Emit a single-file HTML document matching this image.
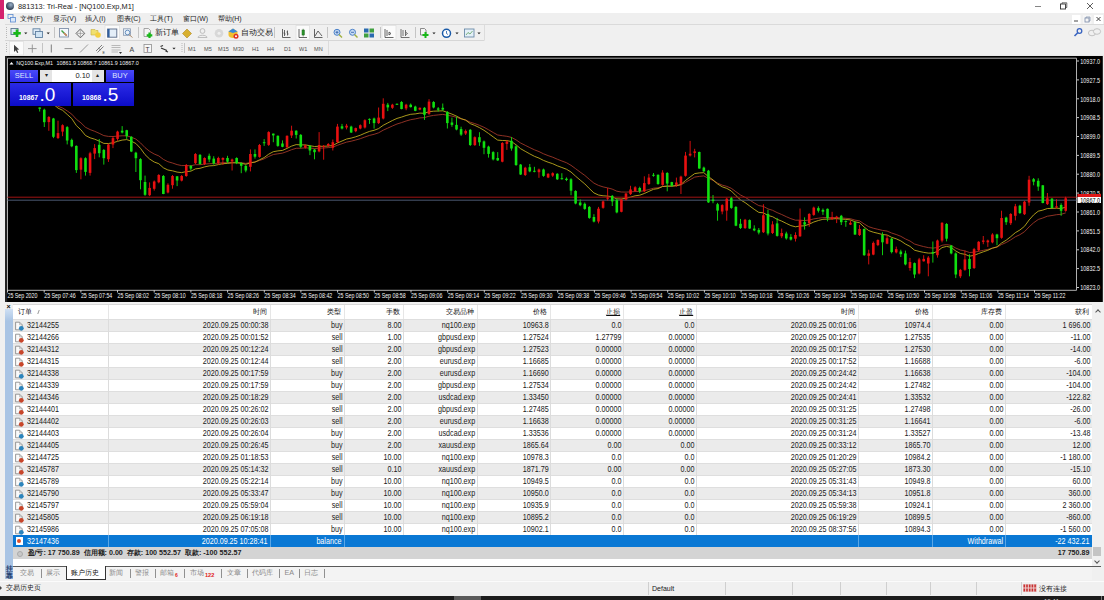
<!DOCTYPE html>
<html><head><meta charset="utf-8"><style>
html,body{margin:0;padding:0;width:1104px;height:600px;overflow:hidden;background:#f0f0f0;font-family:"Liberation Sans",sans-serif}
.abs{position:absolute;white-space:nowrap}
.txt{font-size:7.15px;color:#202020}
.tl{font-size:8.8px;transform:scaleX(0.815);transform-origin:left center}
.tr{font-size:8.8px;transform:scaleX(0.815);transform-origin:right center}
</style></head><body>
<div class="abs" style="left:0;top:0;width:1104px;height:13px;background:#fff"></div>
<div class="abs" style="left:0;top:0;width:4px;height:18.5px;background:#d4226e"></div>
<div class="abs" style="left:6px;top:2px;width:8px;height:8px;border-radius:50%;background:radial-gradient(circle at 60% 35%,#9ab0c8,#2a3a50 70%)"></div>
<div class="abs" style="left:4px;top:13px;width:1100px;height:11px;background:#efefef"></div>
<svg width="1104" height="56" style="position:absolute;left:0;top:0">
<line x1="1035" y1="6.5" x2="1041" y2="6.5" stroke="#666" stroke-width="0.8"/>
<rect x="1060.5" y="4" width="5" height="5" fill="none" stroke="#333" stroke-width="0.9"/><path d="M1062 4V2.8H1066.8V7.5H1065.5" fill="none" stroke="#333" stroke-width="0.7"/>
<path d="M1087 3L1093 9M1093 3L1087 9" stroke="#333" stroke-width="0.8"/>
<rect x="1072" y="15" width="8.5" height="9" fill="#fff"/><rect x="1083" y="15" width="8.5" height="9" fill="#f6f6f6"/><rect x="1094" y="15" width="9" height="9" fill="#fff"/>
<line x1="1074" y1="21" x2="1078" y2="21" stroke="#333" stroke-width="0.9"/>
<rect x="1085" y="18" width="4" height="4" fill="none" stroke="#7a8aa8" stroke-width="0.8"/><path d="M1086 18V17H1090V21H1089" fill="none" stroke="#7a8aa8" stroke-width="0.7"/>
<path d="M1096.5 17L1100.5 21M1100.5 17L1096.5 21" stroke="#444" stroke-width="1"/>
<rect x="8" y="14.5" width="5" height="4" fill="none" stroke="#5a8ad0" stroke-width="0.8"/><rect x="10.5" y="17.5" width="5" height="4.5" fill="#dbe8f8" stroke="#5a8ad0" stroke-width="0.8"/>
<line x1="5" y1="24.5" x2="1104" y2="24.5" stroke="#dadada"/>
<line x1="5" y1="40.5" x2="484.5" y2="40.5" stroke="#d6d6d6"/>
<line x1="484.5" y1="25" x2="484.5" y2="40" stroke="#dcdcdc"/>
<line x1="328.5" y1="41" x2="328.5" y2="55" stroke="#dcdcdc"/>
<line x1="5" y1="55.4" x2="1104" y2="55.4" stroke="#e8e8e8"/>
<line x1="6.5" y1="27" x2="6.5" y2="38" stroke="#b8b8b8" stroke-dasharray="1 1"/>
<line x1="6.5" y1="43" x2="6.5" y2="53" stroke="#b8b8b8" stroke-dasharray="1 1"/>
<line x1="182" y1="43" x2="182" y2="53" stroke="#b8b8b8" stroke-dasharray="1 1"/>
<line x1="54.5" y1="27" x2="54.5" y2="38" stroke="#c4c4c4"/>
<line x1="138.5" y1="27" x2="138.5" y2="38" stroke="#c4c4c4"/>
<line x1="274.5" y1="27" x2="274.5" y2="38" stroke="#c4c4c4"/>
<line x1="327.5" y1="27" x2="327.5" y2="38" stroke="#c4c4c4"/>
<line x1="380.5" y1="27" x2="380.5" y2="38" stroke="#c4c4c4"/>
<line x1="415.5" y1="27" x2="415.5" y2="38" stroke="#c4c4c4"/>
<line x1="42.5" y1="43" x2="42.5" y2="53" stroke="#c4c4c4"/>
<line x1="184.5" y1="43" x2="184.5" y2="53" stroke="#c4c4c4"/>
<rect x="105" y="25.5" width="14.5" height="14" fill="#fbfbfb" stroke="#e0e0e0" stroke-width="0.8"/>
<rect x="296" y="25.5" width="13.5" height="14" fill="#fbfbfb" stroke="#e0e0e0" stroke-width="0.8"/>
<rect x="382" y="25.5" width="14" height="14" fill="#fbfbfb" stroke="#e0e0e0" stroke-width="0.8"/>
<rect x="9.5" y="41.5" width="14" height="13.5" fill="#fbfbfb" stroke="#e0e0e0" stroke-width="0.8"/>
<rect x="11" y="28.5" width="7" height="6" fill="#dbe8f0" stroke="#5a7890" stroke-width="0.9"/>
<path d="M17 29.5V37M13.3 33.3H20.8" stroke="#18b818" stroke-width="2.6"/>
<path d="M24.2 32.5H27.400000000000002L25.8 34.3Z" fill="#222"/>
<path d="M46.6 32.5H49.800000000000004L48.2 34.3Z" fill="#222"/>
<path d="M432.4 32.5H435.6L434 34.3Z" fill="#222"/>
<path d="M455.4 32.5H458.6L457 34.3Z" fill="#222"/>
<path d="M477.4 32.5H480.6L479 34.3Z" fill="#222"/>
<path d="M172.4 47.7H175.6L174 49.5Z" fill="#222"/>
<rect x="33" y="28.8" width="7" height="5.5" fill="#e0ecf8" stroke="#6080a0" stroke-width="0.9"/><rect x="35.5" y="31.5" width="7" height="6" fill="#d0e4f4" stroke="#6080a0" stroke-width="0.9"/>
<rect x="59.5" y="28.5" width="9" height="8.5" fill="#f4f8fc" stroke="#8090a8" stroke-width="0.9"/><path d="M61.5 30.5L66.5 35.5" stroke="#40a040" stroke-width="1.4"/><path d="M64 33L66.8 35.8" stroke="#d08060" stroke-width="1.6"/>
<path d="M80.4 29L84.8 33.4L80.4 37.8L76 33.4Z" fill="none" stroke="#555" stroke-width="0.9"/><path d="M80.4 30V36.8M77 33.4H83.8" stroke="#888" stroke-width="0.6"/>
<path d="M91 29.5H95L96 30.5H98V35H91Z" fill="#f0e070" stroke="#c8b040" stroke-width="0.6"/><circle cx="98" cy="35" r="2.8" fill="#f4d040"/>
<rect x="107.6" y="29" width="9.2" height="8.2" fill="#e4eef8" stroke="#5a6a88" stroke-width="0.9"/><rect x="107.6" y="29" width="2" height="8.2" fill="#3060a0"/>
<rect x="123.5" y="28.8" width="7" height="6.5" fill="#e8f0f8" stroke="#8898b0" stroke-width="0.8"/><circle cx="127.5" cy="32.5" r="2.3" fill="none" stroke="#4a7ab0" stroke-width="0.8"/><path d="M129 34.5L132.5 37.5" stroke="#b09070" stroke-width="1"/>
<path d="M144 28.5H148.5L150.5 30.5V36.5H144Z" fill="#f4f4f4" stroke="#909090" stroke-width="0.8"/><path d="M149.5 32.5V38M146.7 35.3H152.3" stroke="#18b818" stroke-width="2.2"/>
<path d="M182.5 33.5L187 29L191.5 33.5L187 38Z" fill="#d8b030" stroke="#b08820" stroke-width="0.6"/>
<circle cx="202.5" cy="31" r="2.4" fill="none" stroke="#b8b8b8" stroke-width="0.9"/><path d="M198 37.5C198 34.5 207 34.5 207 37.5Z" fill="none" stroke="#b8b8b8" stroke-width="0.9"/>
<circle cx="219" cy="33.3" r="4.3" fill="#d8d8d8"/><circle cx="219" cy="33.3" r="1.5" fill="#efefef"/>
<path d="M228.5 31.5L233 28.5L237.5 31.5V35C237.5 37 235 38 233 38C231 38 228.5 37 228.5 35Z" fill="#f0c030"/><path d="M228.5 31.5L233 28.5L237.5 31.5L233 33Z" fill="#3a8ad8"/><circle cx="236" cy="36.3" r="2.5" fill="#e03020"/><circle cx="236" cy="36.3" r="1" fill="#fff"/>
<path d="M282.5 29V37.5H290.5M284.5 30V36M283.5 33H284.5M284.5 34H285.5M287.5 30.5V35.5M286.5 32H287.5M287.5 34H288.5" fill="none" stroke="#404040" stroke-width="0.8"/>
<path d="M299 29V37.5H307" fill="none" stroke="#404040" stroke-width="0.8"/><rect x="302" y="30" width="2.4" height="5" fill="#30b030" stroke="#206020" stroke-width="0.5"/><line x1="303.2" y1="28.8" x2="303.2" y2="36.5" stroke="#206020" stroke-width="0.6"/>
<path d="M314.5 29V37.5H322.5M315 36L318 31L322 36" fill="none" stroke="#404040" stroke-width="0.8"/>
<circle cx="337" cy="32.3" r="3" fill="#c8dcf4" stroke="#4a80c8" stroke-width="1"/><path d="M339 34.5L342 37.5" stroke="#a0b040" stroke-width="1.4"/>
<circle cx="352.5" cy="32.3" r="3" fill="#c8dcf4" stroke="#4a80c8" stroke-width="1"/><path d="M354.5 34.5L357.5 37.5" stroke="#a0b040" stroke-width="1.4"/>
<path d="M335.5 32.3H338.5M337 30.8V33.8" stroke="#2a5aa8" stroke-width="0.8"/><path d="M351 32.3H354" stroke="#2a5aa8" stroke-width="0.8"/>
<rect x="364" y="28.5" width="4.5" height="4" fill="#2a6ab0"/><rect x="369.5" y="28.5" width="4.5" height="4" fill="#40a040"/><rect x="364" y="33.5" width="4.5" height="4" fill="#40a040"/><rect x="369.5" y="33.5" width="4.5" height="4" fill="#2a6ab0"/>
<path d="M385 29V37.5H393.5M387 30V36M389 32L391 33.5L389 35Z" fill="none" stroke="#404040" stroke-width="0.8"/>
<path d="M401 29V37.5H409.5M403 30V36M405.5 30V36M405.5 32L407.5 33.5L405.5 35" fill="none" stroke="#505050" stroke-width="0.8"/>
<path d="M420.5 28.5H424.5L426 30V35H420.5Z" fill="#f4f4f4" stroke="#707070" stroke-width="0.8"/><path d="M425.5 32V38M422.5 35H428.5" stroke="#18b818" stroke-width="2"/>
<circle cx="446.5" cy="33.3" r="4" fill="#fff" stroke="#1a5aa8" stroke-width="1.5"/><path d="M446.5 31V33.5L448 34.5" stroke="#1a5aa8" stroke-width="0.8" fill="none"/>
<rect x="464.5" y="29" width="9.5" height="8" fill="#e4f0f8" stroke="#6a8aa8" stroke-width="0.9"/><path d="M466 35L468 32.5L470 34L472.5 31" fill="none" stroke="#60a060" stroke-width="0.8"/>
<circle cx="1079.5" cy="31" r="2.3" fill="none" stroke="#3a64c0" stroke-width="1.3"/><path d="M1078 32.5L1074.5 36" stroke="#3a64c0" stroke-width="1.6"/>
<ellipse cx="1092" cy="33" rx="3.6" ry="2.8" fill="none" stroke="#b8b8b8" stroke-width="0.8"/><ellipse cx="1097" cy="31.5" rx="3.6" ry="2.8" fill="#f0f0f0" stroke="#b8b8b8" stroke-width="0.8"/>
<path d="M14 44.7L14 52L15.8 50.3L17.2 53L18.3 52.4L17 49.8L19.2 49.5Z" fill="#404040"/>
<path d="M32.3 44.5V52.7M28 48.6H36.6" stroke="#909090" stroke-width="0.9"/>
<line x1="51.3" y1="44.5" x2="51.3" y2="52.5" stroke="#707070" stroke-width="0.9"/>
<line x1="64.5" y1="48.6" x2="72.5" y2="48.6" stroke="#909090" stroke-width="1"/>
<line x1="80" y1="52.5" x2="88" y2="44.5" stroke="#909090" stroke-width="0.9"/>
<path d="M96 51L102 45M97.5 52.5L103.5 46.5M98 48L101 50" stroke="#707070" stroke-width="0.9"/><text x="102.5" y="53.5" font-size="3.5" font-family="Liberation Sans" fill="#333">E</text>
<path d="M111.5 45.5H120.5M111.5 47.5H120.5M111.5 50H120.5M111.5 52H118" stroke="#a0a0a0" stroke-width="0.7"/><path d="M119 52L120.5 54L122 52Z" fill="#333"/>
<text x="129.5" y="51.8" font-size="7" font-family="Liberation Sans" fill="#444">A</text>
<rect x="144" y="44.5" width="7.5" height="8" fill="#f8f8f8" stroke="#909090" stroke-width="0.8"/><text x="145.6" y="51.5" font-size="6.5" font-family="Liberation Sans" fill="#333">T</text>
<path d="M160.5 46.5L163 45.5M161 48L167 50.5M165.5 51L168 52" stroke="#333" stroke-width="1.3"/>
<text x="188" y="51" font-size="5.6" font-family="Liberation Sans" fill="#555">M1</text>
<text x="204" y="51" font-size="5.6" font-family="Liberation Sans" fill="#555">M5</text>
<text x="218" y="51" font-size="5.6" font-family="Liberation Sans" fill="#555">M15</text>
<text x="233" y="51" font-size="5.6" font-family="Liberation Sans" fill="#555">M30</text>
<text x="252" y="51" font-size="5.6" font-family="Liberation Sans" fill="#555">H1</text>
<text x="267" y="51" font-size="5.6" font-family="Liberation Sans" fill="#555">H4</text>
<text x="284" y="51" font-size="5.6" font-family="Liberation Sans" fill="#555">D1</text>
<text x="299" y="51" font-size="5.6" font-family="Liberation Sans" fill="#555">W1</text>
<text x="314" y="51" font-size="5.6" font-family="Liberation Sans" fill="#555">MN</text>
</svg>
<div class="abs" style="left:18px;top:0px;font-size:7.4px;line-height:13px;color:#222">881313: Tri-Real - [NQ100.Exp,M1]</div>
<div class="abs" style="left:20px;top:13px;font-size:6.9px;line-height:11px;color:#222">文件(F)</div>
<div class="abs" style="left:53px;top:13px;font-size:6.9px;line-height:11px;color:#222">显示(V)</div>
<div class="abs" style="left:85px;top:13px;font-size:6.9px;line-height:11px;color:#222">插入(I)</div>
<div class="abs" style="left:117px;top:13px;font-size:6.9px;line-height:11px;color:#222">图表(C)</div>
<div class="abs" style="left:150px;top:13px;font-size:6.9px;line-height:11px;color:#222">工具(T)</div>
<div class="abs" style="left:183px;top:13px;font-size:6.9px;line-height:11px;color:#222">窗口(W)</div>
<div class="abs" style="left:218px;top:13px;font-size:6.9px;line-height:11px;color:#222">帮助(H)</div>
<div class="abs" style="left:155px;top:27px;font-size:7.8px;line-height:11px;color:#222">新订单</div>
<div class="abs" style="left:240.5px;top:27px;font-size:7.8px;line-height:11px;color:#222">自动交易</div>
<svg width="1104" height="302" style="position:absolute;left:0;top:0">
<rect x="5.2" y="56" width="1097.6" height="246" fill="#000"/>
<rect x="5.2" y="56" width="2" height="246" fill="#222"/>
<path d="M7.5 58.2H1076.5V290.3H7.5Z" fill="none" stroke="#b0b0b0" stroke-width="1"/>
<line x1="1077" y1="61.0" x2="1079" y2="61.0" stroke="#c8c8c8"/>
<text transform="translate(1080.3,63.7) scale(0.78,1)" fill="#f4f4f4" font-size="7" font-family="Liberation Sans">10937.0</text>
<line x1="1077" y1="79.9" x2="1079" y2="79.9" stroke="#c8c8c8"/>
<text transform="translate(1080.3,82.6) scale(0.78,1)" fill="#f4f4f4" font-size="7" font-family="Liberation Sans">10927.5</text>
<line x1="1077" y1="98.8" x2="1079" y2="98.8" stroke="#c8c8c8"/>
<text transform="translate(1080.3,101.5) scale(0.78,1)" fill="#f4f4f4" font-size="7" font-family="Liberation Sans">10918.0</text>
<line x1="1077" y1="117.6" x2="1079" y2="117.6" stroke="#c8c8c8"/>
<text transform="translate(1080.3,120.3) scale(0.78,1)" fill="#f4f4f4" font-size="7" font-family="Liberation Sans">10908.5</text>
<line x1="1077" y1="136.5" x2="1079" y2="136.5" stroke="#c8c8c8"/>
<text transform="translate(1080.3,139.2) scale(0.78,1)" fill="#f4f4f4" font-size="7" font-family="Liberation Sans">10899.0</text>
<line x1="1077" y1="155.4" x2="1079" y2="155.4" stroke="#c8c8c8"/>
<text transform="translate(1080.3,158.1) scale(0.78,1)" fill="#f4f4f4" font-size="7" font-family="Liberation Sans">10889.5</text>
<line x1="1077" y1="174.2" x2="1079" y2="174.2" stroke="#c8c8c8"/>
<text transform="translate(1080.3,176.9) scale(0.78,1)" fill="#f4f4f4" font-size="7" font-family="Liberation Sans">10880.0</text>
<line x1="1077" y1="193.1" x2="1079" y2="193.1" stroke="#c8c8c8"/>
<text transform="translate(1080.3,195.8) scale(0.78,1)" fill="#f4f4f4" font-size="7" font-family="Liberation Sans">10870.5</text>
<line x1="1077" y1="212.0" x2="1079" y2="212.0" stroke="#c8c8c8"/>
<text transform="translate(1080.3,214.7) scale(0.78,1)" fill="#f4f4f4" font-size="7" font-family="Liberation Sans">10861.0</text>
<line x1="1077" y1="230.9" x2="1079" y2="230.9" stroke="#c8c8c8"/>
<text transform="translate(1080.3,233.6) scale(0.78,1)" fill="#f4f4f4" font-size="7" font-family="Liberation Sans">10851.5</text>
<line x1="1077" y1="249.8" x2="1079" y2="249.8" stroke="#c8c8c8"/>
<text transform="translate(1080.3,252.4) scale(0.78,1)" fill="#f4f4f4" font-size="7" font-family="Liberation Sans">10842.0</text>
<line x1="1077" y1="268.6" x2="1079" y2="268.6" stroke="#c8c8c8"/>
<text transform="translate(1080.3,271.3) scale(0.78,1)" fill="#f4f4f4" font-size="7" font-family="Liberation Sans">10832.5</text>
<line x1="1077" y1="287.5" x2="1079" y2="287.5" stroke="#c8c8c8"/>
<text transform="translate(1080.3,290.2) scale(0.78,1)" fill="#f4f4f4" font-size="7" font-family="Liberation Sans">10823.0</text>
<line x1="7.5" y1="290" x2="7.5" y2="292.5" stroke="#c8c8c8"/>
<text transform="translate(7.5,297.6) scale(0.84,1)" fill="#f4f4f4" font-size="6.3" font-family="Liberation Sans">25 Sep 2020</text>
<line x1="44.2" y1="290" x2="44.2" y2="292.5" stroke="#c8c8c8"/>
<text transform="translate(44.2,297.6) scale(0.84,1)" fill="#f4f4f4" font-size="6.3" font-family="Liberation Sans">25 Sep 07:46</text>
<line x1="80.9" y1="290" x2="80.9" y2="292.5" stroke="#c8c8c8"/>
<text transform="translate(80.9,297.6) scale(0.84,1)" fill="#f4f4f4" font-size="6.3" font-family="Liberation Sans">25 Sep 07:54</text>
<line x1="117.5" y1="290" x2="117.5" y2="292.5" stroke="#c8c8c8"/>
<text transform="translate(117.5,297.6) scale(0.84,1)" fill="#f4f4f4" font-size="6.3" font-family="Liberation Sans">25 Sep 08:02</text>
<line x1="154.2" y1="290" x2="154.2" y2="292.5" stroke="#c8c8c8"/>
<text transform="translate(154.2,297.6) scale(0.84,1)" fill="#f4f4f4" font-size="6.3" font-family="Liberation Sans">25 Sep 08:10</text>
<line x1="190.9" y1="290" x2="190.9" y2="292.5" stroke="#c8c8c8"/>
<text transform="translate(190.9,297.6) scale(0.84,1)" fill="#f4f4f4" font-size="6.3" font-family="Liberation Sans">25 Sep 08:18</text>
<line x1="227.6" y1="290" x2="227.6" y2="292.5" stroke="#c8c8c8"/>
<text transform="translate(227.6,297.6) scale(0.84,1)" fill="#f4f4f4" font-size="6.3" font-family="Liberation Sans">25 Sep 08:26</text>
<line x1="264.3" y1="290" x2="264.3" y2="292.5" stroke="#c8c8c8"/>
<text transform="translate(264.3,297.6) scale(0.84,1)" fill="#f4f4f4" font-size="6.3" font-family="Liberation Sans">25 Sep 08:34</text>
<line x1="300.9" y1="290" x2="300.9" y2="292.5" stroke="#c8c8c8"/>
<text transform="translate(300.9,297.6) scale(0.84,1)" fill="#f4f4f4" font-size="6.3" font-family="Liberation Sans">25 Sep 08:42</text>
<line x1="337.6" y1="290" x2="337.6" y2="292.5" stroke="#c8c8c8"/>
<text transform="translate(337.6,297.6) scale(0.84,1)" fill="#f4f4f4" font-size="6.3" font-family="Liberation Sans">25 Sep 08:50</text>
<line x1="374.3" y1="290" x2="374.3" y2="292.5" stroke="#c8c8c8"/>
<text transform="translate(374.3,297.6) scale(0.84,1)" fill="#f4f4f4" font-size="6.3" font-family="Liberation Sans">25 Sep 08:58</text>
<line x1="411.0" y1="290" x2="411.0" y2="292.5" stroke="#c8c8c8"/>
<text transform="translate(411.0,297.6) scale(0.84,1)" fill="#f4f4f4" font-size="6.3" font-family="Liberation Sans">25 Sep 09:06</text>
<line x1="447.7" y1="290" x2="447.7" y2="292.5" stroke="#c8c8c8"/>
<text transform="translate(447.7,297.6) scale(0.84,1)" fill="#f4f4f4" font-size="6.3" font-family="Liberation Sans">25 Sep 09:14</text>
<line x1="484.3" y1="290" x2="484.3" y2="292.5" stroke="#c8c8c8"/>
<text transform="translate(484.3,297.6) scale(0.84,1)" fill="#f4f4f4" font-size="6.3" font-family="Liberation Sans">25 Sep 09:22</text>
<line x1="521.0" y1="290" x2="521.0" y2="292.5" stroke="#c8c8c8"/>
<text transform="translate(521.0,297.6) scale(0.84,1)" fill="#f4f4f4" font-size="6.3" font-family="Liberation Sans">25 Sep 09:30</text>
<line x1="557.7" y1="290" x2="557.7" y2="292.5" stroke="#c8c8c8"/>
<text transform="translate(557.7,297.6) scale(0.84,1)" fill="#f4f4f4" font-size="6.3" font-family="Liberation Sans">25 Sep 09:38</text>
<line x1="594.4" y1="290" x2="594.4" y2="292.5" stroke="#c8c8c8"/>
<text transform="translate(594.4,297.6) scale(0.84,1)" fill="#f4f4f4" font-size="6.3" font-family="Liberation Sans">25 Sep 09:46</text>
<line x1="631.1" y1="290" x2="631.1" y2="292.5" stroke="#c8c8c8"/>
<text transform="translate(631.1,297.6) scale(0.84,1)" fill="#f4f4f4" font-size="6.3" font-family="Liberation Sans">25 Sep 09:54</text>
<line x1="667.7" y1="290" x2="667.7" y2="292.5" stroke="#c8c8c8"/>
<text transform="translate(667.7,297.6) scale(0.84,1)" fill="#f4f4f4" font-size="6.3" font-family="Liberation Sans">25 Sep 10:02</text>
<line x1="704.4" y1="290" x2="704.4" y2="292.5" stroke="#c8c8c8"/>
<text transform="translate(704.4,297.6) scale(0.84,1)" fill="#f4f4f4" font-size="6.3" font-family="Liberation Sans">25 Sep 10:10</text>
<line x1="741.1" y1="290" x2="741.1" y2="292.5" stroke="#c8c8c8"/>
<text transform="translate(741.1,297.6) scale(0.84,1)" fill="#f4f4f4" font-size="6.3" font-family="Liberation Sans">25 Sep 10:18</text>
<line x1="777.8" y1="290" x2="777.8" y2="292.5" stroke="#c8c8c8"/>
<text transform="translate(777.8,297.6) scale(0.84,1)" fill="#f4f4f4" font-size="6.3" font-family="Liberation Sans">25 Sep 10:26</text>
<line x1="814.5" y1="290" x2="814.5" y2="292.5" stroke="#c8c8c8"/>
<text transform="translate(814.5,297.6) scale(0.84,1)" fill="#f4f4f4" font-size="6.3" font-family="Liberation Sans">25 Sep 10:34</text>
<line x1="851.1" y1="290" x2="851.1" y2="292.5" stroke="#c8c8c8"/>
<text transform="translate(851.1,297.6) scale(0.84,1)" fill="#f4f4f4" font-size="6.3" font-family="Liberation Sans">25 Sep 10:42</text>
<line x1="887.8" y1="290" x2="887.8" y2="292.5" stroke="#c8c8c8"/>
<text transform="translate(887.8,297.6) scale(0.84,1)" fill="#f4f4f4" font-size="6.3" font-family="Liberation Sans">25 Sep 10:50</text>
<line x1="924.5" y1="290" x2="924.5" y2="292.5" stroke="#c8c8c8"/>
<text transform="translate(924.5,297.6) scale(0.84,1)" fill="#f4f4f4" font-size="6.3" font-family="Liberation Sans">25 Sep 10:58</text>
<line x1="961.2" y1="290" x2="961.2" y2="292.5" stroke="#c8c8c8"/>
<text transform="translate(961.2,297.6) scale(0.84,1)" fill="#f4f4f4" font-size="6.3" font-family="Liberation Sans">25 Sep 11:06</text>
<line x1="997.9" y1="290" x2="997.9" y2="292.5" stroke="#c8c8c8"/>
<text transform="translate(997.9,297.6) scale(0.84,1)" fill="#f4f4f4" font-size="6.3" font-family="Liberation Sans">25 Sep 11:14</text>
<line x1="1034.5" y1="290" x2="1034.5" y2="292.5" stroke="#c8c8c8"/>
<text transform="translate(1034.5,297.6) scale(0.84,1)" fill="#f4f4f4" font-size="6.3" font-family="Liberation Sans">25 Sep 11:22</text>
<polyline points="53.4,103.6 58.0,106.3 62.6,108.0 67.2,110.9 71.8,114.2 76.3,119.2 80.9,122.8 85.5,127.3 90.1,129.6 94.7,131.3 99.2,133.3 103.8,135.6 108.4,136.4 113.0,136.5 117.6,136.1 122.1,135.8 126.7,135.8 131.3,137.2 135.9,139.1 140.5,142.9 145.0,147.6 149.6,151.3 154.2,154.0 158.8,155.9 163.4,159.4 167.9,161.7 172.5,163.0 177.1,164.6 181.7,165.6 186.3,165.5 190.8,165.8 195.4,164.7 200.0,164.7 204.6,164.1 209.2,163.7 213.7,163.6 218.3,163.1 222.9,162.7 227.5,162.6 232.1,162.3 236.6,162.4 241.2,162.7 245.8,163.4 250.4,162.5 255.0,162.0 259.5,160.5 264.1,158.9 268.7,156.5 273.3,154.5 277.9,153.8 282.5,153.1 287.0,151.5 291.6,149.7 296.2,148.3 300.8,148.2 305.4,147.9 309.9,148.1 314.5,148.5 319.1,148.2 323.7,148.0 328.3,147.6 332.8,147.1 337.4,145.3 342.0,143.7 346.6,142.1 351.2,141.2 355.7,140.0 360.3,138.7 364.9,137.0 369.5,135.4 374.1,134.3 378.6,132.8 383.2,130.2 387.8,128.1 392.4,126.0 397.0,124.0 401.5,122.6 406.1,121.0 410.7,119.7 415.3,118.9 419.9,117.9 424.4,117.6 429.0,116.2 433.6,115.4 438.2,114.9 442.8,114.4 447.3,115.2 451.9,116.1 456.5,117.3 461.1,118.9 465.7,120.0 470.2,122.2 474.8,123.6 479.4,125.3 484.0,127.3 488.6,129.8 493.2,132.5 497.7,135.0 502.3,135.7 506.9,136.3 511.5,137.4 516.1,139.9 520.6,143.0 525.2,145.3 529.8,147.6 534.4,149.8 539.0,151.6 543.5,153.8 548.1,155.6 552.7,157.2 557.3,159.2 561.9,161.0 566.4,162.7 571.0,165.3 575.6,168.7 580.2,172.1 584.8,175.4 589.3,179.3 593.9,183.1 598.5,185.4 603.1,186.9 607.7,187.9 612.2,189.1 616.8,191.2 621.4,192.0 626.0,192.1 630.6,191.9 635.1,191.5 639.7,191.4 644.3,190.7 648.9,189.5 653.5,188.2 658.0,187.8 662.6,186.5 667.2,186.2 671.8,186.2 676.4,185.8 680.9,185.0 685.5,182.3 690.1,179.7 694.7,177.1 699.3,176.4 703.8,175.9 708.4,178.3 713.0,180.4 717.6,183.1 722.2,185.1 726.8,186.4 731.3,188.3 735.9,191.7 740.5,195.0 745.1,197.3 749.7,200.1 754.2,202.9 758.8,205.6 763.4,206.4 768.0,208.9 772.6,210.3 777.1,212.6 781.7,214.5 786.3,216.7 790.9,218.7 795.5,220.2 800.0,220.2 804.6,220.6 809.2,220.0 813.8,218.9 818.4,218.2 822.9,217.6 827.5,217.6 832.1,217.6 836.7,217.5 841.3,217.9 845.8,218.3 850.4,218.7 855.0,220.1 859.6,220.9 864.2,224.0 868.7,226.7 873.3,228.2 877.9,229.3 882.5,230.4 887.1,231.1 891.6,233.0 896.2,234.5 900.8,236.3 905.4,238.9 910.0,241.0 914.5,244.0 919.1,245.4 923.7,246.6 928.3,247.6 932.9,248.1 937.4,247.5 942.0,245.2 946.6,244.6 951.2,245.4 955.8,248.1 960.4,250.0 964.9,250.9 969.5,252.5 974.1,252.2 978.7,251.3 983.3,250.3 987.8,249.4 992.4,248.1 997.0,247.2 1001.6,244.5 1006.2,242.5 1010.7,239.9 1015.3,236.8 1019.9,234.7 1024.5,231.7 1029.1,226.9 1033.6,222.8 1038.2,219.5 1042.8,218.0 1047.4,216.2 1052.0,215.5 1056.5,214.7 1061.1,214.3 1065.7,212.9" fill="none" stroke="#a83a2a" stroke-width="0.85"/>
<polyline points="53.4,104.2 58.0,108.1 62.6,110.3 67.2,114.4 71.8,118.6 76.3,125.5 80.9,129.8 85.5,135.5 90.1,137.8 94.7,139.2 99.2,141.1 103.8,143.4 108.4,143.5 113.0,142.8 117.6,141.3 122.1,140.1 126.7,139.6 131.3,141.2 135.9,143.5 140.5,148.4 145.0,154.6 149.6,159.0 154.2,162.0 158.8,163.7 163.4,167.8 167.9,170.0 172.5,170.8 177.1,172.1 181.7,172.6 186.3,171.6 190.8,171.2 195.4,168.9 200.0,168.3 204.6,166.9 209.2,165.9 213.7,165.6 218.3,164.6 222.9,163.7 227.5,163.4 232.1,162.9 236.6,162.9 241.2,163.3 245.8,164.3 250.4,162.9 255.0,162.1 259.5,159.8 264.1,157.6 268.7,154.2 273.3,151.7 277.9,150.9 282.5,150.4 287.0,148.4 291.6,146.1 296.2,144.6 300.8,144.9 305.4,144.9 309.9,145.7 314.5,146.5 319.1,146.3 323.7,146.3 328.3,146.0 332.8,145.5 337.4,143.0 342.0,141.0 346.6,139.0 351.2,138.1 355.7,136.8 360.3,135.2 364.9,133.2 369.5,131.4 374.1,130.3 378.6,128.6 383.2,125.3 387.8,122.9 392.4,120.5 397.0,118.4 401.5,117.1 406.1,115.5 410.7,114.3 415.3,113.9 419.9,113.1 424.4,113.3 429.0,111.7 433.6,111.2 438.2,111.0 442.8,110.8 447.3,112.4 451.9,114.1 456.5,116.1 461.1,118.6 465.7,120.2 470.2,123.6 474.8,125.4 479.4,127.6 484.0,130.3 488.6,133.5 493.2,136.9 497.7,140.1 502.3,140.5 506.9,140.6 511.5,141.6 516.1,144.8 520.6,148.7 525.2,151.3 529.8,153.9 534.4,156.3 539.0,158.1 543.5,160.4 548.1,162.2 552.7,163.7 557.3,165.8 561.9,167.5 566.4,169.2 571.0,172.0 575.6,176.2 580.2,180.1 584.8,183.9 589.3,188.5 593.9,192.9 598.5,195.0 603.1,195.8 607.7,196.1 612.2,196.8 616.8,198.9 621.4,199.0 626.0,198.2 630.6,197.1 635.1,195.8 639.7,195.2 644.3,193.5 648.9,191.4 653.5,189.3 658.0,188.6 662.6,186.5 667.2,186.1 671.8,186.1 676.4,185.6 680.9,184.4 685.5,180.5 690.1,177.0 694.7,173.6 699.3,172.9 703.8,172.7 708.4,176.6 713.0,179.9 717.6,184.0 722.2,186.8 726.8,188.4 731.3,191.0 735.9,195.6 740.5,199.9 745.1,202.6 749.7,206.0 754.2,209.3 758.8,212.4 763.4,212.8 768.0,215.5 772.6,216.7 777.1,219.3 781.7,221.1 786.3,223.4 790.9,225.6 795.5,226.8 800.0,226.0 804.6,225.8 809.2,224.2 813.8,222.0 818.4,220.5 822.9,219.3 827.5,219.1 832.1,218.9 836.7,218.6 841.3,219.1 845.8,219.4 850.4,219.9 855.0,221.8 859.6,222.8 864.2,227.1 868.7,230.6 873.3,232.2 877.9,233.3 882.5,234.5 887.1,235.0 891.6,237.3 896.2,238.8 900.8,240.9 905.4,244.0 910.0,246.4 914.5,250.2 919.1,251.4 923.7,252.4 928.3,253.1 932.9,253.1 937.4,251.4 942.0,247.6 946.6,246.4 951.2,247.4 955.8,251.0 960.4,253.5 964.9,254.3 969.5,256.2 974.1,255.3 978.7,253.5 983.3,251.8 987.8,250.3 992.4,248.2 997.0,246.8 1001.6,243.0 1006.2,240.2 1010.7,236.7 1015.3,232.7 1019.9,230.0 1024.5,226.3 1029.1,220.0 1033.6,214.9 1038.2,211.2 1042.8,210.1 1047.4,208.5 1052.0,208.4 1056.5,208.2 1061.1,208.5 1065.7,207.2" fill="none" stroke="#c8b420" stroke-width="0.85"/>
<line x1="7.5" y1="197.2" x2="1076.5" y2="197.2" stroke="#a01414" stroke-width="1"/>
<line x1="7.5" y1="200.2" x2="1076.5" y2="200.2" stroke="#4a5870" stroke-width="1"/>
<rect x="39.24" y="107.5" width="0.9" height="4.0" fill="#10e010"/>
<rect x="38.39" y="107.5" width="2.6" height="1.3" fill="#10e010"/>
<rect x="43.82" y="108.7" width="0.9" height="18.3" fill="#10e010"/>
<rect x="42.97" y="109.7" width="2.6" height="12.5" fill="#10e010"/>
<rect x="48.40" y="116.1" width="0.9" height="14.7" fill="#e81010"/>
<rect x="47.55" y="117.0" width="2.6" height="5.1" fill="#e81010"/>
<rect x="52.98" y="117.9" width="0.9" height="20.2" fill="#10e010"/>
<rect x="52.13" y="118.5" width="2.6" height="18.3" fill="#10e010"/>
<rect x="57.56" y="120.7" width="0.9" height="18.3" fill="#e81010"/>
<rect x="56.71" y="133.1" width="2.6" height="4.9" fill="#e81010"/>
<rect x="62.14" y="124.3" width="0.9" height="11.9" fill="#e81010"/>
<rect x="61.29" y="125.2" width="2.6" height="6.4" fill="#e81010"/>
<rect x="66.72" y="126.1" width="0.9" height="18.3" fill="#10e010"/>
<rect x="65.87" y="127.1" width="2.6" height="13.4" fill="#10e010"/>
<rect x="71.30" y="138.6" width="0.9" height="8.6" fill="#10e010"/>
<rect x="70.45" y="139.9" width="2.6" height="6.4" fill="#10e010"/>
<rect x="75.88" y="145.4" width="0.9" height="27.5" fill="#10e010"/>
<rect x="75.03" y="145.9" width="2.6" height="24.2" fill="#10e010"/>
<rect x="80.46" y="157.3" width="0.9" height="22.0" fill="#e81010"/>
<rect x="79.61" y="158.2" width="2.6" height="11.5" fill="#e81010"/>
<rect x="85.04" y="157.3" width="0.9" height="18.3" fill="#10e010"/>
<rect x="84.19" y="158.2" width="2.6" height="13.7" fill="#10e010"/>
<rect x="89.62" y="151.8" width="0.9" height="23.8" fill="#e81010"/>
<rect x="88.77" y="153.3" width="2.6" height="19.6" fill="#e81010"/>
<rect x="94.21" y="144.1" width="0.9" height="15.0" fill="#e81010"/>
<rect x="93.36" y="148.1" width="2.6" height="5.5" fill="#e81010"/>
<rect x="98.79" y="139.0" width="0.9" height="18.3" fill="#10e010"/>
<rect x="97.94" y="144.8" width="2.6" height="8.4" fill="#10e010"/>
<rect x="103.37" y="149.0" width="0.9" height="15.6" fill="#10e010"/>
<rect x="102.52" y="150.0" width="2.6" height="8.2" fill="#10e010"/>
<rect x="107.95" y="143.6" width="0.9" height="18.3" fill="#e81010"/>
<rect x="107.10" y="144.5" width="2.6" height="14.7" fill="#e81010"/>
<rect x="112.53" y="136.2" width="0.9" height="11.9" fill="#e81010"/>
<rect x="111.68" y="138.1" width="2.6" height="6.4" fill="#e81010"/>
<rect x="117.11" y="130.7" width="0.9" height="10.1" fill="#e81010"/>
<rect x="116.26" y="131.6" width="2.6" height="7.3" fill="#e81010"/>
<rect x="121.69" y="126.1" width="0.9" height="7.3" fill="#10e010"/>
<rect x="120.84" y="130.7" width="2.6" height="1.8" fill="#10e010"/>
<rect x="126.27" y="129.8" width="0.9" height="9.2" fill="#10e010"/>
<rect x="125.42" y="130.2" width="2.6" height="6.0" fill="#10e010"/>
<rect x="130.85" y="136.2" width="0.9" height="15.9" fill="#10e010"/>
<rect x="130.00" y="136.8" width="2.6" height="14.7" fill="#10e010"/>
<rect x="135.43" y="151.8" width="0.9" height="20.2" fill="#10e010"/>
<rect x="134.58" y="152.7" width="2.6" height="5.5" fill="#10e010"/>
<rect x="140.01" y="158.2" width="0.9" height="31.1" fill="#10e010"/>
<rect x="139.16" y="159.1" width="2.6" height="21.1" fill="#10e010"/>
<rect x="144.59" y="175.6" width="0.9" height="20.2" fill="#10e010"/>
<rect x="143.74" y="182.0" width="2.6" height="12.8" fill="#10e010"/>
<rect x="149.17" y="182.4" width="0.9" height="13.7" fill="#e81010"/>
<rect x="148.32" y="187.9" width="2.6" height="7.3" fill="#e81010"/>
<rect x="153.75" y="180.5" width="0.9" height="10.1" fill="#e81010"/>
<rect x="152.90" y="181.5" width="2.6" height="7.3" fill="#e81010"/>
<rect x="158.33" y="174.1" width="0.9" height="9.2" fill="#e81010"/>
<rect x="157.48" y="175.0" width="2.6" height="7.3" fill="#e81010"/>
<rect x="162.91" y="175.0" width="0.9" height="19.2" fill="#10e010"/>
<rect x="162.06" y="176.0" width="2.6" height="18.0" fill="#10e010"/>
<rect x="167.49" y="183.3" width="0.9" height="10.1" fill="#e81010"/>
<rect x="166.64" y="184.8" width="2.6" height="7.7" fill="#e81010"/>
<rect x="172.07" y="175.0" width="0.9" height="13.7" fill="#e81010"/>
<rect x="171.22" y="176.0" width="2.6" height="9.2" fill="#e81010"/>
<rect x="176.65" y="176.0" width="0.9" height="10.1" fill="#10e010"/>
<rect x="175.80" y="176.3" width="2.6" height="4.2" fill="#10e010"/>
<rect x="181.23" y="175.0" width="0.9" height="6.4" fill="#e81010"/>
<rect x="180.38" y="176.0" width="2.6" height="4.6" fill="#e81010"/>
<rect x="185.81" y="164.0" width="0.9" height="12.8" fill="#e81010"/>
<rect x="184.96" y="165.0" width="2.6" height="11.0" fill="#e81010"/>
<rect x="190.39" y="165.0" width="0.9" height="5.5" fill="#10e010"/>
<rect x="189.54" y="165.9" width="2.6" height="2.7" fill="#10e010"/>
<rect x="194.97" y="153.1" width="0.9" height="11.0" fill="#e81010"/>
<rect x="194.12" y="154.0" width="2.6" height="9.2" fill="#e81010"/>
<rect x="199.55" y="154.0" width="0.9" height="10.6" fill="#10e010"/>
<rect x="198.70" y="154.9" width="2.6" height="9.2" fill="#10e010"/>
<rect x="204.13" y="157.3" width="0.9" height="7.7" fill="#e81010"/>
<rect x="203.28" y="158.0" width="2.6" height="6.0" fill="#e81010"/>
<rect x="208.72" y="153.6" width="0.9" height="8.6" fill="#10e010"/>
<rect x="207.87" y="155.8" width="2.6" height="3.7" fill="#10e010"/>
<rect x="213.30" y="156.2" width="0.9" height="8.4" fill="#10e010"/>
<rect x="212.45" y="158.6" width="2.6" height="4.9" fill="#10e010"/>
<rect x="217.88" y="156.7" width="0.9" height="8.2" fill="#e81010"/>
<rect x="217.03" y="158.0" width="2.6" height="5.1" fill="#e81010"/>
<rect x="222.46" y="157.3" width="0.9" height="7.7" fill="#e81010"/>
<rect x="221.61" y="158.0" width="2.6" height="1.8" fill="#e81010"/>
<rect x="227.04" y="155.8" width="0.9" height="7.3" fill="#10e010"/>
<rect x="226.19" y="158.0" width="2.6" height="3.7" fill="#10e010"/>
<rect x="231.62" y="158.6" width="0.9" height="11.9" fill="#e81010"/>
<rect x="230.77" y="159.5" width="2.6" height="1.8" fill="#e81010"/>
<rect x="236.20" y="157.3" width="0.9" height="6.8" fill="#10e010"/>
<rect x="235.35" y="158.0" width="2.6" height="5.1" fill="#10e010"/>
<rect x="240.78" y="162.2" width="0.9" height="11.0" fill="#10e010"/>
<rect x="239.93" y="163.1" width="2.6" height="2.7" fill="#10e010"/>
<rect x="245.36" y="165.0" width="0.9" height="7.3" fill="#10e010"/>
<rect x="244.51" y="165.9" width="2.6" height="4.6" fill="#10e010"/>
<rect x="249.94" y="149.4" width="0.9" height="22.0" fill="#e81010"/>
<rect x="249.09" y="154.0" width="2.6" height="12.8" fill="#e81010"/>
<rect x="254.52" y="149.4" width="0.9" height="9.2" fill="#10e010"/>
<rect x="253.67" y="154.0" width="2.6" height="2.7" fill="#10e010"/>
<rect x="259.10" y="144.0" width="0.9" height="13.7" fill="#e81010"/>
<rect x="258.25" y="145.0" width="2.6" height="11.9" fill="#e81010"/>
<rect x="263.68" y="139.1" width="0.9" height="6.8" fill="#10e010"/>
<rect x="262.83" y="142.2" width="2.6" height="1.0" fill="#10e010"/>
<rect x="268.26" y="131.2" width="0.9" height="14.7" fill="#e81010"/>
<rect x="267.41" y="132.1" width="2.6" height="12.8" fill="#e81010"/>
<rect x="272.84" y="133.6" width="0.9" height="8.6" fill="#10e010"/>
<rect x="271.99" y="133.6" width="2.6" height="1.8" fill="#10e010"/>
<rect x="277.42" y="135.4" width="0.9" height="11.4" fill="#10e010"/>
<rect x="276.57" y="135.8" width="2.6" height="10.1" fill="#10e010"/>
<rect x="282.00" y="140.4" width="0.9" height="6.8" fill="#10e010"/>
<rect x="281.15" y="143.5" width="2.6" height="3.3" fill="#10e010"/>
<rect x="286.58" y="135.4" width="0.9" height="12.8" fill="#e81010"/>
<rect x="285.73" y="135.8" width="2.6" height="11.4" fill="#e81010"/>
<rect x="291.16" y="125.7" width="0.9" height="12.3" fill="#e81010"/>
<rect x="290.31" y="130.7" width="2.6" height="4.8" fill="#e81010"/>
<rect x="295.74" y="130.3" width="0.9" height="8.2" fill="#10e010"/>
<rect x="294.89" y="130.7" width="2.6" height="4.2" fill="#10e010"/>
<rect x="300.32" y="134.0" width="0.9" height="14.3" fill="#10e010"/>
<rect x="299.47" y="134.9" width="2.6" height="11.9" fill="#10e010"/>
<rect x="304.90" y="144.6" width="0.9" height="4.0" fill="#e81010"/>
<rect x="304.05" y="145.3" width="2.6" height="2.4" fill="#e81010"/>
<rect x="309.48" y="145.0" width="0.9" height="10.1" fill="#10e010"/>
<rect x="308.63" y="145.9" width="2.6" height="4.6" fill="#10e010"/>
<rect x="314.06" y="149.0" width="0.9" height="10.3" fill="#10e010"/>
<rect x="313.21" y="149.5" width="2.6" height="2.7" fill="#10e010"/>
<rect x="318.65" y="132.1" width="0.9" height="20.2" fill="#e81010"/>
<rect x="317.80" y="145.0" width="2.6" height="6.4" fill="#e81010"/>
<rect x="323.23" y="145.0" width="0.9" height="14.7" fill="#e81010"/>
<rect x="322.38" y="145.9" width="2.6" height="1.0" fill="#e81010"/>
<rect x="327.81" y="143.1" width="0.9" height="3.7" fill="#e81010"/>
<rect x="326.96" y="144.0" width="2.6" height="1.8" fill="#e81010"/>
<rect x="332.39" y="139.5" width="0.9" height="11.0" fill="#e81010"/>
<rect x="331.54" y="142.2" width="2.6" height="5.5" fill="#e81010"/>
<rect x="336.97" y="123.9" width="0.9" height="19.2" fill="#e81010"/>
<rect x="336.12" y="126.6" width="2.6" height="15.6" fill="#e81010"/>
<rect x="341.55" y="123.9" width="0.9" height="5.5" fill="#10e010"/>
<rect x="340.70" y="126.3" width="2.6" height="2.2" fill="#10e010"/>
<rect x="346.13" y="123.9" width="0.9" height="5.5" fill="#e81010"/>
<rect x="345.28" y="125.7" width="2.6" height="1.8" fill="#e81010"/>
<rect x="350.71" y="125.7" width="0.9" height="7.3" fill="#10e010"/>
<rect x="349.86" y="126.6" width="2.6" height="5.9" fill="#10e010"/>
<rect x="355.29" y="127.6" width="0.9" height="4.6" fill="#e81010"/>
<rect x="354.44" y="128.1" width="2.6" height="3.1" fill="#e81010"/>
<rect x="359.87" y="124.4" width="0.9" height="4.9" fill="#e81010"/>
<rect x="359.02" y="125.2" width="2.6" height="3.3" fill="#e81010"/>
<rect x="364.45" y="119.3" width="0.9" height="9.2" fill="#e81010"/>
<rect x="363.60" y="120.2" width="2.6" height="7.3" fill="#e81010"/>
<rect x="369.03" y="118.4" width="0.9" height="5.5" fill="#10e010"/>
<rect x="368.18" y="118.9" width="2.6" height="1.0" fill="#10e010"/>
<rect x="373.61" y="117.6" width="0.9" height="11.0" fill="#10e010"/>
<rect x="372.76" y="118.5" width="2.6" height="4.6" fill="#10e010"/>
<rect x="378.19" y="107.5" width="0.9" height="16.5" fill="#e81010"/>
<rect x="377.34" y="117.6" width="2.6" height="5.5" fill="#e81010"/>
<rect x="382.77" y="98.3" width="0.9" height="21.1" fill="#e81010"/>
<rect x="381.92" y="103.8" width="2.6" height="14.7" fill="#e81010"/>
<rect x="387.35" y="102.9" width="0.9" height="8.2" fill="#10e010"/>
<rect x="386.50" y="104.7" width="2.6" height="2.7" fill="#10e010"/>
<rect x="391.93" y="103.8" width="0.9" height="5.1" fill="#e81010"/>
<rect x="391.08" y="104.7" width="2.6" height="3.1" fill="#e81010"/>
<rect x="396.51" y="103.5" width="0.9" height="1.3" fill="#10e010"/>
<rect x="395.66" y="103.8" width="2.6" height="1.0" fill="#10e010"/>
<rect x="401.09" y="101.1" width="0.9" height="8.2" fill="#10e010"/>
<rect x="400.24" y="102.0" width="2.6" height="7.0" fill="#10e010"/>
<rect x="405.67" y="103.8" width="0.9" height="6.4" fill="#e81010"/>
<rect x="404.82" y="104.7" width="2.6" height="3.7" fill="#e81010"/>
<rect x="410.25" y="103.5" width="0.9" height="4.0" fill="#10e010"/>
<rect x="409.40" y="104.7" width="2.6" height="2.4" fill="#10e010"/>
<rect x="414.83" y="105.7" width="0.9" height="5.5" fill="#10e010"/>
<rect x="413.98" y="106.6" width="2.6" height="4.2" fill="#10e010"/>
<rect x="419.41" y="107.5" width="0.9" height="2.7" fill="#e81010"/>
<rect x="418.56" y="107.8" width="2.6" height="1.8" fill="#e81010"/>
<rect x="423.99" y="107.1" width="0.9" height="12.8" fill="#10e010"/>
<rect x="423.14" y="107.8" width="2.6" height="7.0" fill="#10e010"/>
<rect x="428.57" y="99.2" width="0.9" height="15.6" fill="#e81010"/>
<rect x="427.72" y="101.6" width="2.6" height="12.3" fill="#e81010"/>
<rect x="433.16" y="101.1" width="0.9" height="7.3" fill="#10e010"/>
<rect x="432.31" y="102.0" width="2.6" height="5.5" fill="#10e010"/>
<rect x="437.74" y="107.1" width="0.9" height="4.4" fill="#10e010"/>
<rect x="436.89" y="108.4" width="2.6" height="1.3" fill="#10e010"/>
<rect x="442.32" y="103.5" width="0.9" height="7.3" fill="#10e010"/>
<rect x="441.47" y="107.8" width="2.6" height="1.8" fill="#10e010"/>
<rect x="446.90" y="111.1" width="0.9" height="17.4" fill="#10e010"/>
<rect x="446.05" y="112.1" width="2.6" height="11.0" fill="#10e010"/>
<rect x="451.48" y="117.6" width="0.9" height="9.2" fill="#10e010"/>
<rect x="450.63" y="122.5" width="2.6" height="2.4" fill="#10e010"/>
<rect x="456.06" y="116.6" width="0.9" height="13.7" fill="#10e010"/>
<rect x="455.21" y="124.9" width="2.6" height="4.6" fill="#10e010"/>
<rect x="460.64" y="126.7" width="0.9" height="9.2" fill="#10e010"/>
<rect x="459.79" y="129.1" width="2.6" height="5.5" fill="#10e010"/>
<rect x="465.22" y="129.5" width="0.9" height="5.5" fill="#e81010"/>
<rect x="464.37" y="130.9" width="2.6" height="2.6" fill="#e81010"/>
<rect x="469.80" y="129.1" width="0.9" height="16.9" fill="#10e010"/>
<rect x="468.95" y="129.8" width="2.6" height="15.2" fill="#10e010"/>
<rect x="474.38" y="136.4" width="0.9" height="9.5" fill="#e81010"/>
<rect x="473.53" y="137.2" width="2.6" height="7.9" fill="#e81010"/>
<rect x="478.96" y="132.2" width="0.9" height="13.7" fill="#10e010"/>
<rect x="478.11" y="137.2" width="2.6" height="5.1" fill="#10e010"/>
<rect x="483.54" y="140.5" width="0.9" height="13.7" fill="#10e010"/>
<rect x="482.69" y="141.4" width="2.6" height="6.4" fill="#10e010"/>
<rect x="488.12" y="145.7" width="0.9" height="11.9" fill="#10e010"/>
<rect x="487.27" y="146.6" width="2.6" height="7.3" fill="#10e010"/>
<rect x="492.70" y="151.2" width="0.9" height="9.2" fill="#10e010"/>
<rect x="491.85" y="152.1" width="2.6" height="7.3" fill="#10e010"/>
<rect x="497.28" y="152.1" width="0.9" height="8.8" fill="#10e010"/>
<rect x="496.43" y="158.0" width="2.6" height="2.4" fill="#10e010"/>
<rect x="501.86" y="142.1" width="0.9" height="20.2" fill="#e81010"/>
<rect x="501.01" y="143.0" width="2.6" height="18.7" fill="#e81010"/>
<rect x="506.44" y="140.2" width="0.9" height="9.7" fill="#e81010"/>
<rect x="505.59" y="141.5" width="2.6" height="2.4" fill="#e81010"/>
<rect x="511.02" y="137.1" width="0.9" height="13.6" fill="#10e010"/>
<rect x="510.17" y="140.8" width="2.6" height="7.7" fill="#10e010"/>
<rect x="515.60" y="145.2" width="0.9" height="20.7" fill="#10e010"/>
<rect x="514.75" y="146.3" width="2.6" height="18.7" fill="#10e010"/>
<rect x="520.18" y="164.0" width="0.9" height="11.0" fill="#10e010"/>
<rect x="519.33" y="164.6" width="2.6" height="9.9" fill="#10e010"/>
<rect x="524.76" y="166.8" width="0.9" height="9.2" fill="#e81010"/>
<rect x="523.91" y="167.7" width="2.6" height="7.3" fill="#e81010"/>
<rect x="529.34" y="164.0" width="0.9" height="8.2" fill="#10e010"/>
<rect x="528.49" y="167.2" width="2.6" height="4.2" fill="#10e010"/>
<rect x="533.92" y="166.8" width="0.9" height="5.5" fill="#10e010"/>
<rect x="533.07" y="170.8" width="2.6" height="1.0" fill="#10e010"/>
<rect x="538.50" y="168.6" width="0.9" height="9.2" fill="#e81010"/>
<rect x="537.65" y="169.5" width="2.6" height="2.7" fill="#e81010"/>
<rect x="543.08" y="168.6" width="0.9" height="8.2" fill="#10e010"/>
<rect x="542.23" y="169.5" width="2.6" height="6.4" fill="#10e010"/>
<rect x="547.67" y="173.2" width="0.9" height="4.9" fill="#e81010"/>
<rect x="546.82" y="173.8" width="2.6" height="3.7" fill="#e81010"/>
<rect x="552.25" y="172.3" width="0.9" height="4.6" fill="#e81010"/>
<rect x="551.40" y="173.2" width="2.6" height="2.4" fill="#e81010"/>
<rect x="556.83" y="173.2" width="0.9" height="6.8" fill="#10e010"/>
<rect x="555.98" y="173.8" width="2.6" height="5.5" fill="#10e010"/>
<rect x="561.41" y="173.2" width="0.9" height="6.4" fill="#10e010"/>
<rect x="560.56" y="178.2" width="2.6" height="1.0" fill="#10e010"/>
<rect x="565.99" y="177.4" width="0.9" height="3.7" fill="#10e010"/>
<rect x="565.14" y="178.7" width="2.6" height="1.3" fill="#10e010"/>
<rect x="570.57" y="178.2" width="0.9" height="17.0" fill="#10e010"/>
<rect x="569.72" y="179.3" width="2.6" height="11.4" fill="#10e010"/>
<rect x="575.15" y="190.2" width="0.9" height="14.1" fill="#10e010"/>
<rect x="574.30" y="191.0" width="2.6" height="12.5" fill="#10e010"/>
<rect x="579.73" y="199.4" width="0.9" height="6.8" fill="#10e010"/>
<rect x="578.88" y="202.5" width="2.6" height="2.7" fill="#10e010"/>
<rect x="584.31" y="202.5" width="0.9" height="7.3" fill="#10e010"/>
<rect x="583.46" y="203.8" width="2.6" height="5.1" fill="#10e010"/>
<rect x="588.89" y="206.0" width="0.9" height="12.8" fill="#10e010"/>
<rect x="588.04" y="206.9" width="2.6" height="11.0" fill="#10e010"/>
<rect x="593.47" y="214.2" width="0.9" height="8.2" fill="#10e010"/>
<rect x="592.62" y="217.0" width="2.6" height="4.6" fill="#10e010"/>
<rect x="598.05" y="206.9" width="0.9" height="16.5" fill="#e81010"/>
<rect x="597.20" y="208.7" width="2.6" height="12.8" fill="#e81010"/>
<rect x="602.63" y="200.5" width="0.9" height="8.2" fill="#e81010"/>
<rect x="601.78" y="201.4" width="2.6" height="6.4" fill="#e81010"/>
<rect x="607.21" y="188.0" width="0.9" height="12.5" fill="#e81010"/>
<rect x="606.36" y="197.7" width="2.6" height="1.0" fill="#e81010"/>
<rect x="611.79" y="195.0" width="0.9" height="11.0" fill="#10e010"/>
<rect x="610.94" y="195.9" width="2.6" height="5.5" fill="#10e010"/>
<rect x="616.37" y="198.6" width="0.9" height="14.7" fill="#10e010"/>
<rect x="615.52" y="200.1" width="2.6" height="12.3" fill="#10e010"/>
<rect x="620.95" y="198.6" width="0.9" height="13.7" fill="#e81010"/>
<rect x="620.10" y="199.5" width="2.6" height="12.3" fill="#e81010"/>
<rect x="625.53" y="193.1" width="0.9" height="7.3" fill="#e81010"/>
<rect x="624.68" y="193.5" width="2.6" height="6.0" fill="#e81010"/>
<rect x="630.11" y="185.8" width="0.9" height="9.2" fill="#e81010"/>
<rect x="629.26" y="189.5" width="2.6" height="4.6" fill="#e81010"/>
<rect x="634.69" y="186.2" width="0.9" height="5.5" fill="#e81010"/>
<rect x="633.84" y="187.3" width="2.6" height="3.7" fill="#e81010"/>
<rect x="639.27" y="186.7" width="0.9" height="6.4" fill="#10e010"/>
<rect x="638.42" y="188.0" width="2.6" height="3.3" fill="#10e010"/>
<rect x="643.85" y="176.3" width="0.9" height="15.9" fill="#e81010"/>
<rect x="643.00" y="183.1" width="2.6" height="8.2" fill="#e81010"/>
<rect x="648.43" y="173.9" width="0.9" height="11.0" fill="#e81010"/>
<rect x="647.58" y="177.6" width="2.6" height="6.4" fill="#e81010"/>
<rect x="653.01" y="173.0" width="0.9" height="3.7" fill="#10e010"/>
<rect x="652.16" y="174.8" width="2.6" height="1.0" fill="#10e010"/>
<rect x="657.59" y="174.4" width="0.9" height="10.4" fill="#10e010"/>
<rect x="656.74" y="174.8" width="2.6" height="9.2" fill="#10e010"/>
<rect x="662.18" y="170.2" width="0.9" height="15.6" fill="#e81010"/>
<rect x="661.33" y="172.6" width="2.6" height="12.3" fill="#e81010"/>
<rect x="666.76" y="172.1" width="0.9" height="19.2" fill="#10e010"/>
<rect x="665.91" y="173.0" width="2.6" height="10.6" fill="#10e010"/>
<rect x="671.34" y="181.8" width="0.9" height="4.9" fill="#10e010"/>
<rect x="670.49" y="182.1" width="2.6" height="3.7" fill="#10e010"/>
<rect x="675.92" y="177.6" width="0.9" height="9.2" fill="#e81010"/>
<rect x="675.07" y="182.5" width="2.6" height="2.4" fill="#e81010"/>
<rect x="680.50" y="175.7" width="0.9" height="18.3" fill="#e81010"/>
<rect x="679.65" y="176.6" width="2.6" height="7.3" fill="#e81010"/>
<rect x="685.08" y="151.9" width="0.9" height="24.7" fill="#e81010"/>
<rect x="684.23" y="155.6" width="2.6" height="20.2" fill="#e81010"/>
<rect x="689.66" y="140.9" width="0.9" height="15.6" fill="#e81010"/>
<rect x="688.81" y="153.7" width="2.6" height="1.8" fill="#e81010"/>
<rect x="694.24" y="148.8" width="0.9" height="8.6" fill="#e81010"/>
<rect x="693.39" y="151.4" width="2.6" height="1.5" fill="#e81010"/>
<rect x="698.82" y="151.6" width="0.9" height="17.2" fill="#10e010"/>
<rect x="697.97" y="152.0" width="2.6" height="16.5" fill="#10e010"/>
<rect x="703.40" y="166.6" width="0.9" height="5.5" fill="#10e010"/>
<rect x="702.55" y="167.6" width="2.6" height="3.7" fill="#10e010"/>
<rect x="707.98" y="169.9" width="0.9" height="33.0" fill="#10e010"/>
<rect x="707.13" y="170.7" width="2.6" height="31.7" fill="#10e010"/>
<rect x="712.56" y="195.0" width="0.9" height="8.2" fill="#10e010"/>
<rect x="711.71" y="199.6" width="2.6" height="1.5" fill="#10e010"/>
<rect x="717.14" y="202.9" width="0.9" height="17.8" fill="#10e010"/>
<rect x="716.29" y="204.2" width="2.6" height="6.4" fill="#10e010"/>
<rect x="721.72" y="204.2" width="0.9" height="10.1" fill="#e81010"/>
<rect x="720.87" y="205.1" width="2.6" height="6.4" fill="#e81010"/>
<rect x="726.30" y="197.8" width="0.9" height="22.9" fill="#e81010"/>
<rect x="725.45" y="198.7" width="2.6" height="11.9" fill="#e81010"/>
<rect x="730.88" y="196.9" width="0.9" height="11.9" fill="#10e010"/>
<rect x="730.03" y="198.2" width="2.6" height="9.7" fill="#10e010"/>
<rect x="735.46" y="206.0" width="0.9" height="20.2" fill="#10e010"/>
<rect x="734.61" y="207.0" width="2.6" height="18.7" fill="#10e010"/>
<rect x="740.04" y="218.9" width="0.9" height="10.1" fill="#10e010"/>
<rect x="739.19" y="223.8" width="2.6" height="4.2" fill="#10e010"/>
<rect x="744.62" y="218.9" width="0.9" height="10.1" fill="#e81010"/>
<rect x="743.77" y="219.8" width="2.6" height="8.2" fill="#e81010"/>
<rect x="749.20" y="219.4" width="0.9" height="9.5" fill="#10e010"/>
<rect x="748.35" y="220.1" width="2.6" height="8.4" fill="#10e010"/>
<rect x="753.78" y="225.3" width="0.9" height="5.9" fill="#10e010"/>
<rect x="752.93" y="228.6" width="2.6" height="1.8" fill="#10e010"/>
<rect x="758.36" y="228.0" width="0.9" height="6.4" fill="#10e010"/>
<rect x="757.51" y="229.9" width="2.6" height="2.7" fill="#10e010"/>
<rect x="762.94" y="204.2" width="0.9" height="28.8" fill="#e81010"/>
<rect x="762.09" y="215.2" width="2.6" height="17.0" fill="#e81010"/>
<rect x="767.52" y="209.7" width="0.9" height="25.7" fill="#10e010"/>
<rect x="766.67" y="213.9" width="2.6" height="19.6" fill="#10e010"/>
<rect x="772.10" y="221.2" width="0.9" height="12.8" fill="#e81010"/>
<rect x="771.25" y="224.4" width="2.6" height="8.6" fill="#e81010"/>
<rect x="776.69" y="217.9" width="0.9" height="18.7" fill="#10e010"/>
<rect x="775.84" y="223.4" width="2.6" height="12.5" fill="#10e010"/>
<rect x="781.27" y="228.6" width="0.9" height="9.5" fill="#e81010"/>
<rect x="780.42" y="233.0" width="2.6" height="3.3" fill="#e81010"/>
<rect x="785.85" y="231.7" width="0.9" height="7.9" fill="#10e010"/>
<rect x="785.00" y="233.5" width="2.6" height="4.9" fill="#10e010"/>
<rect x="790.43" y="234.1" width="0.9" height="6.4" fill="#10e010"/>
<rect x="789.58" y="236.9" width="2.6" height="2.7" fill="#10e010"/>
<rect x="795.01" y="232.3" width="0.9" height="9.2" fill="#e81010"/>
<rect x="794.16" y="235.0" width="2.6" height="3.7" fill="#e81010"/>
<rect x="799.59" y="208.5" width="0.9" height="28.4" fill="#e81010"/>
<rect x="798.74" y="220.4" width="2.6" height="15.9" fill="#e81010"/>
<rect x="804.17" y="217.3" width="0.9" height="12.3" fill="#10e010"/>
<rect x="803.32" y="222.2" width="2.6" height="2.4" fill="#10e010"/>
<rect x="808.75" y="213.1" width="0.9" height="13.7" fill="#e81010"/>
<rect x="807.90" y="214.0" width="2.6" height="9.2" fill="#e81010"/>
<rect x="813.33" y="206.6" width="0.9" height="9.2" fill="#e81010"/>
<rect x="812.48" y="207.6" width="2.6" height="7.3" fill="#e81010"/>
<rect x="817.91" y="206.3" width="0.9" height="6.2" fill="#10e010"/>
<rect x="817.06" y="208.1" width="2.6" height="2.6" fill="#10e010"/>
<rect x="822.49" y="208.5" width="0.9" height="6.4" fill="#10e010"/>
<rect x="821.64" y="209.9" width="2.6" height="1.8" fill="#10e010"/>
<rect x="827.07" y="208.5" width="0.9" height="12.8" fill="#10e010"/>
<rect x="826.22" y="208.8" width="2.6" height="9.2" fill="#10e010"/>
<rect x="831.65" y="211.8" width="0.9" height="8.1" fill="#e81010"/>
<rect x="830.80" y="217.3" width="2.6" height="1.8" fill="#e81010"/>
<rect x="836.23" y="215.8" width="0.9" height="7.3" fill="#e81010"/>
<rect x="835.38" y="216.7" width="2.6" height="1.3" fill="#e81010"/>
<rect x="840.81" y="214.9" width="0.9" height="10.1" fill="#10e010"/>
<rect x="839.96" y="215.8" width="2.6" height="6.4" fill="#10e010"/>
<rect x="845.39" y="220.4" width="0.9" height="6.4" fill="#10e010"/>
<rect x="844.54" y="220.9" width="2.6" height="1.0" fill="#10e010"/>
<rect x="849.97" y="220.4" width="0.9" height="4.6" fill="#e81010"/>
<rect x="849.12" y="222.8" width="2.6" height="1.8" fill="#e81010"/>
<rect x="854.55" y="221.3" width="0.9" height="13.7" fill="#10e010"/>
<rect x="853.70" y="222.2" width="2.6" height="12.3" fill="#10e010"/>
<rect x="859.13" y="225.0" width="0.9" height="11.0" fill="#e81010"/>
<rect x="858.28" y="229.0" width="2.6" height="6.0" fill="#e81010"/>
<rect x="863.71" y="228.3" width="0.9" height="27.5" fill="#10e010"/>
<rect x="862.86" y="229.0" width="2.6" height="26.2" fill="#10e010"/>
<rect x="868.29" y="249.7" width="0.9" height="14.7" fill="#e81010"/>
<rect x="867.44" y="253.4" width="2.6" height="2.4" fill="#e81010"/>
<rect x="872.87" y="241.5" width="0.9" height="13.7" fill="#e81010"/>
<rect x="872.02" y="242.9" width="2.6" height="11.7" fill="#e81010"/>
<rect x="877.45" y="239.3" width="0.9" height="6.8" fill="#e81010"/>
<rect x="876.60" y="240.0" width="2.6" height="5.1" fill="#e81010"/>
<rect x="882.03" y="232.3" width="0.9" height="22.9" fill="#10e010"/>
<rect x="881.18" y="235.0" width="2.6" height="7.3" fill="#10e010"/>
<rect x="886.61" y="235.0" width="0.9" height="9.2" fill="#e81010"/>
<rect x="885.76" y="238.2" width="2.6" height="5.5" fill="#e81010"/>
<rect x="891.20" y="237.8" width="0.9" height="15.6" fill="#10e010"/>
<rect x="890.35" y="238.7" width="2.6" height="13.4" fill="#10e010"/>
<rect x="895.78" y="246.6" width="0.9" height="6.8" fill="#e81010"/>
<rect x="894.93" y="249.1" width="2.6" height="3.3" fill="#e81010"/>
<rect x="900.36" y="249.7" width="0.9" height="7.3" fill="#10e010"/>
<rect x="899.51" y="251.5" width="2.6" height="2.7" fill="#10e010"/>
<rect x="904.94" y="250.6" width="0.9" height="14.7" fill="#10e010"/>
<rect x="904.09" y="253.4" width="2.6" height="11.0" fill="#10e010"/>
<rect x="909.52" y="257.9" width="0.9" height="12.8" fill="#e81010"/>
<rect x="908.67" y="262.0" width="2.6" height="6.0" fill="#e81010"/>
<rect x="914.10" y="262.5" width="0.9" height="15.6" fill="#10e010"/>
<rect x="913.25" y="263.1" width="2.6" height="11.4" fill="#10e010"/>
<rect x="918.68" y="257.9" width="0.9" height="16.5" fill="#e81010"/>
<rect x="917.83" y="259.4" width="2.6" height="14.1" fill="#e81010"/>
<rect x="923.26" y="255.2" width="0.9" height="6.4" fill="#e81010"/>
<rect x="922.41" y="258.9" width="2.6" height="2.4" fill="#e81010"/>
<rect x="927.84" y="256.1" width="0.9" height="20.2" fill="#e81010"/>
<rect x="926.99" y="257.6" width="2.6" height="5.9" fill="#e81010"/>
<rect x="932.42" y="241.5" width="0.9" height="21.1" fill="#10e010"/>
<rect x="931.57" y="252.1" width="2.6" height="1.3" fill="#10e010"/>
<rect x="937.00" y="239.6" width="0.9" height="18.0" fill="#e81010"/>
<rect x="936.15" y="240.5" width="2.6" height="14.7" fill="#e81010"/>
<rect x="941.58" y="222.2" width="0.9" height="20.2" fill="#e81010"/>
<rect x="940.73" y="222.8" width="2.6" height="17.8" fill="#e81010"/>
<rect x="946.16" y="223.1" width="0.9" height="18.3" fill="#10e010"/>
<rect x="945.31" y="224.0" width="2.6" height="14.7" fill="#10e010"/>
<rect x="950.74" y="245.1" width="0.9" height="9.2" fill="#10e010"/>
<rect x="949.89" y="245.5" width="2.6" height="7.9" fill="#10e010"/>
<rect x="955.32" y="252.4" width="0.9" height="25.7" fill="#10e010"/>
<rect x="954.47" y="253.4" width="2.6" height="21.1" fill="#10e010"/>
<rect x="959.90" y="268.9" width="0.9" height="9.2" fill="#e81010"/>
<rect x="959.05" y="269.9" width="2.6" height="6.4" fill="#e81010"/>
<rect x="964.48" y="250.6" width="0.9" height="20.2" fill="#e81010"/>
<rect x="963.63" y="259.4" width="2.6" height="10.4" fill="#e81010"/>
<rect x="969.06" y="254.3" width="0.9" height="22.0" fill="#10e010"/>
<rect x="968.21" y="258.9" width="2.6" height="10.1" fill="#10e010"/>
<rect x="973.64" y="247.9" width="0.9" height="21.1" fill="#e81010"/>
<rect x="972.79" y="249.1" width="2.6" height="18.9" fill="#e81010"/>
<rect x="978.22" y="241.1" width="0.9" height="10.4" fill="#e81010"/>
<rect x="977.37" y="241.8" width="2.6" height="8.4" fill="#e81010"/>
<rect x="982.80" y="236.0" width="0.9" height="8.2" fill="#e81010"/>
<rect x="981.95" y="240.5" width="2.6" height="1.3" fill="#e81010"/>
<rect x="987.38" y="239.6" width="0.9" height="7.3" fill="#e81010"/>
<rect x="986.53" y="240.5" width="2.6" height="1.8" fill="#e81010"/>
<rect x="991.96" y="233.2" width="0.9" height="10.1" fill="#e81010"/>
<rect x="991.11" y="234.5" width="2.6" height="7.9" fill="#e81010"/>
<rect x="996.54" y="233.8" width="0.9" height="11.4" fill="#10e010"/>
<rect x="995.69" y="234.5" width="2.6" height="3.7" fill="#10e010"/>
<rect x="1001.12" y="210.7" width="0.9" height="28.0" fill="#e81010"/>
<rect x="1000.27" y="218.0" width="2.6" height="19.8" fill="#e81010"/>
<rect x="1005.71" y="216.7" width="0.9" height="8.2" fill="#10e010"/>
<rect x="1004.86" y="217.6" width="2.6" height="4.6" fill="#10e010"/>
<rect x="1010.29" y="213.1" width="0.9" height="11.9" fill="#e81010"/>
<rect x="1009.44" y="214.0" width="2.6" height="9.2" fill="#e81010"/>
<rect x="1014.87" y="203.9" width="0.9" height="16.5" fill="#e81010"/>
<rect x="1014.02" y="206.3" width="2.6" height="9.5" fill="#e81010"/>
<rect x="1019.45" y="204.8" width="0.9" height="9.2" fill="#10e010"/>
<rect x="1018.60" y="205.7" width="2.6" height="7.3" fill="#10e010"/>
<rect x="1024.03" y="200.8" width="0.9" height="14.2" fill="#e81010"/>
<rect x="1023.18" y="201.7" width="2.6" height="12.5" fill="#e81010"/>
<rect x="1028.61" y="175.8" width="0.9" height="30.0" fill="#e81010"/>
<rect x="1027.76" y="179.7" width="2.6" height="22.8" fill="#e81010"/>
<rect x="1033.19" y="178.0" width="0.9" height="7.3" fill="#10e010"/>
<rect x="1032.34" y="179.2" width="2.6" height="2.5" fill="#10e010"/>
<rect x="1037.77" y="178.3" width="0.9" height="12.5" fill="#10e010"/>
<rect x="1036.92" y="180.8" width="2.6" height="5.8" fill="#10e010"/>
<rect x="1042.35" y="185.0" width="0.9" height="18.3" fill="#10e010"/>
<rect x="1041.50" y="185.3" width="2.6" height="17.7" fill="#10e010"/>
<rect x="1046.93" y="193.0" width="0.9" height="12.0" fill="#e81010"/>
<rect x="1046.08" y="198.3" width="2.6" height="5.8" fill="#e81010"/>
<rect x="1051.51" y="198.0" width="0.9" height="10.3" fill="#10e010"/>
<rect x="1050.66" y="198.7" width="2.6" height="9.3" fill="#10e010"/>
<rect x="1056.09" y="199.2" width="0.9" height="9.2" fill="#e81010"/>
<rect x="1055.24" y="206.3" width="2.6" height="1.2" fill="#e81010"/>
<rect x="1060.67" y="203.3" width="0.9" height="12.5" fill="#10e010"/>
<rect x="1059.82" y="205.0" width="2.6" height="5.8" fill="#10e010"/>
<rect x="1065.25" y="196.7" width="0.9" height="15.0" fill="#e81010"/>
<rect x="1064.40" y="198.3" width="2.6" height="12.5" fill="#e81010"/>
<rect x="1077.5" y="194" width="23.5" height="3" fill="#e01818"/>
<rect x="1077.5" y="197" width="23.5" height="6" fill="#fff"/>
<text transform="translate(1080.3,202.6) scale(0.78,1)" fill="#000" font-size="7" font-family="Liberation Sans">10867.0</text>
<path d="M9.5 64.5L11.5 62L13.5 64.5Z" fill="#fff"/>
<text x="16.2" y="64.8" fill="#f0f0f0" font-size="5.4" font-family="Liberation Sans">NQ100.Exp,M1</text>
<text x="56.4" y="64.8" fill="#f0f0f0" font-size="5.4" font-family="Liberation Sans">10861.9 10868.7 10861.9 10867.0</text>
</svg>

<div class="abs" style="left:10px;top:69.5px;width:28px;height:12.5px;background:linear-gradient(#4a4af8,#2c2ce8);color:#dfe4ff;font-size:7.5px;line-height:12.5px;text-align:center">SELL</div>
<div class="abs" style="left:40px;top:70px;width:12px;height:11.5px;background:#e4e4e4;font-size:6px;line-height:11px;text-align:center;color:#222">&#9662;</div>
<div class="abs" style="left:52px;top:70px;width:39.5px;height:11.5px;background:#fff;font-size:7.5px;line-height:11.5px;text-align:right;color:#222"><span style="padding-right:1.5px">0.10</span></div>
<div class="abs" style="left:91.5px;top:70px;width:12px;height:11.5px;background:#e4e4e4;font-size:6px;line-height:11px;text-align:center;color:#222">&#9652;</div>
<div class="abs" style="left:106px;top:69.5px;width:28px;height:12.5px;background:linear-gradient(#4a4af8,#2c2ce8);color:#dfe4ff;font-size:7.5px;line-height:12.5px;text-align:center">BUY</div>
<div class="abs" style="left:10px;top:83.3px;width:61px;height:22.7px;background:linear-gradient(#2a2ae6,#0c0cc8)"></div>
<div class="abs" style="left:73.3px;top:83.3px;width:60.5px;height:22.7px;background:linear-gradient(#2a2ae6,#0c0cc8)"></div>
<div class="abs" style="left:19px;top:94px;color:#fff;font-size:6.9px;font-weight:bold;line-height:8px">10867</div>
<div class="abs" style="left:39.5px;top:84.5px;color:#fff;font-size:19px;line-height:19px">.0</div>
<div class="abs" style="left:82px;top:94px;color:#fff;font-size:6.9px;font-weight:bold;line-height:8px">10868</div>
<div class="abs" style="left:102.5px;top:84.5px;color:#fff;font-size:19px;line-height:19px">.5</div>

<div class="abs" style="left:0;top:302px;width:1104px;height:298px;background:#f0f0f0"></div>
<div class="abs" style="left:5px;top:309px;width:8px;height:270px;background:linear-gradient(#cfe0f4,#a9c4e4 12px,#a9c4e4)"></div>
<div class="abs" style="left:6.5px;top:303px;font-size:7px;line-height:8px;color:#111;font-weight:bold">&#215;</div>
<div class="abs" style="left:5px;top:565px;width:8px;font-size:6.8px;line-height:7px;color:#24406e;font-weight:bold;white-space:normal;text-align:center">挂<br>靠</div>
<div class="abs" style="left:13px;top:304px;width:1091px;height:262px;background:#fff"></div>
<div class="abs" style="left:1092px;top:304px;width:12px;height:262px;background:#f0f0f0"></div>
<div class="abs" style="left:13px;top:304px;width:1079px;height:1px;background:#d8d8d8"></div><div class="abs" style="left:13px;top:305px;width:1079px;height:14px;background:#fff"></div>
<div class="abs txt" style="left:17.5px;top:305px;line-height:14px;color:#111">订单</div><div class="abs" style="left:37.5px;top:309.5px;width:0.8px;height:4px;background:#999;transform:skewX(-20deg)"></div>
<div class="abs" style="left:108px;top:305px;width:1px;height:14px;background:#e6e6e6"></div>
<div class="abs txt" style="left:108px;width:159.2px;top:305px;line-height:14px;text-align:right;color:#111">时间</div>
<div class="abs" style="left:270px;top:305px;width:1px;height:14px;background:#e6e6e6"></div>
<div class="abs txt" style="left:270px;width:71.2px;top:305px;line-height:14px;text-align:right;color:#111">类型</div>
<div class="abs" style="left:344px;top:305px;width:1px;height:14px;background:#e6e6e6"></div>
<div class="abs txt" style="left:344px;width:56.2px;top:305px;line-height:14px;text-align:right;color:#111">手数</div>
<div class="abs" style="left:403px;top:305px;width:1px;height:14px;background:#e6e6e6"></div>
<div class="abs txt" style="left:403px;width:70.89999999999999px;top:305px;line-height:14px;text-align:right;color:#111">交易品种</div>
<div class="abs" style="left:476.7px;top:305px;width:1px;height:14px;background:#e6e6e6"></div>
<div class="abs txt" style="left:476.7px;width:70.50000000000001px;top:305px;line-height:14px;text-align:right;color:#111">价格</div>
<div class="abs" style="left:550px;top:305px;width:1px;height:14px;background:#e6e6e6"></div>
<div class="abs txt" style="left:550px;width:70.2px;top:305px;line-height:14px;text-align:right;color:#111;text-decoration:underline">止损</div>
<div class="abs" style="left:623px;top:305px;width:1px;height:14px;background:#e6e6e6"></div>
<div class="abs txt" style="left:623px;width:70.2px;top:305px;line-height:14px;text-align:right;color:#111;text-decoration:underline">止盈</div>
<div class="abs" style="left:696px;top:305px;width:1px;height:14px;background:#e6e6e6"></div>
<div class="abs txt" style="left:696px;width:159.2px;top:305px;line-height:14px;text-align:right;color:#111">时间</div>
<div class="abs" style="left:858px;top:305px;width:1px;height:14px;background:#e6e6e6"></div>
<div class="abs txt" style="left:858px;width:71.2px;top:305px;line-height:14px;text-align:right;color:#111">价格</div>
<div class="abs" style="left:932px;top:305px;width:1px;height:14px;background:#e6e6e6"></div>
<div class="abs txt" style="left:932px;width:70.2px;top:305px;line-height:14px;text-align:right;color:#111">库存费</div>
<div class="abs" style="left:1005px;top:305px;width:1px;height:14px;background:#e6e6e6"></div>
<div class="abs txt" style="left:1005px;width:84.2px;top:305px;line-height:14px;text-align:right;color:#111">获利</div>
<div class="abs" style="left:13px;top:319px;width:1079px;height:12px;background:#ebebeb"></div>
<div class="abs" style="left:13px;top:319px;width:1079px;height:1px;background:#dedede"></div>
<div class="abs" style="left:108px;top:319px;width:1px;height:12px;background:#dcdcdc"></div>
<div class="abs" style="left:270px;top:319px;width:1px;height:12px;background:#dcdcdc"></div>
<div class="abs" style="left:344px;top:319px;width:1px;height:12px;background:#dcdcdc"></div>
<div class="abs" style="left:403px;top:319px;width:1px;height:12px;background:#dcdcdc"></div>
<div class="abs" style="left:476.7px;top:319px;width:1px;height:12px;background:#dcdcdc"></div>
<div class="abs" style="left:550px;top:319px;width:1px;height:12px;background:#dcdcdc"></div>
<div class="abs" style="left:623px;top:319px;width:1px;height:12px;background:#dcdcdc"></div>
<div class="abs" style="left:696px;top:319px;width:1px;height:12px;background:#dcdcdc"></div>
<div class="abs" style="left:858px;top:319px;width:1px;height:12px;background:#dcdcdc"></div>
<div class="abs" style="left:932px;top:319px;width:1px;height:12px;background:#dcdcdc"></div>
<div class="abs" style="left:1005px;top:319px;width:1px;height:12px;background:#dcdcdc"></div>
<svg class="abs" style="left:14px;top:320.5px" width="11" height="11" viewBox="0 0 11 11"><path d="M1.6 1.2H5.6L8.2 3.8V8.8H1.6Z" fill="#fafafa" stroke="#7a7a7a" stroke-width="0.75"/><path d="M5.6 1.2V3.8H8.2" fill="none" stroke="#9a9a9a" stroke-width="0.6"/><circle cx="7.3" cy="7.3" r="2.4" fill="#2c84bc"/></svg>
<div class="abs txt tl" style="left:26.6px;top:319px;line-height:12px">32144255</div>
<div class="abs txt tr" style="left:108px;width:160.5px;top:319px;line-height:12px;text-align:right">2020.09.25 00:00:38</div>
<div class="abs txt tr" style="left:270px;width:72.5px;top:319px;line-height:12px;text-align:right">buy</div>
<div class="abs txt tr" style="left:344px;width:57.5px;top:319px;line-height:12px;text-align:right">8.00</div>
<div class="abs txt tr" style="left:403px;width:72.19999999999999px;top:319px;line-height:12px;text-align:right">nq100.exp</div>
<div class="abs txt tr" style="left:476.7px;width:71.80000000000001px;top:319px;line-height:12px;text-align:right">10963.8</div>
<div class="abs txt tr" style="left:550px;width:71.5px;top:319px;line-height:12px;text-align:right">0.0</div>
<div class="abs txt tr" style="left:623px;width:71.5px;top:319px;line-height:12px;text-align:right">0.0</div>
<div class="abs txt tr" style="left:696px;width:160.5px;top:319px;line-height:12px;text-align:right">2020.09.25 00:01:06</div>
<div class="abs txt tr" style="left:858px;width:72.5px;top:319px;line-height:12px;text-align:right">10974.4</div>
<div class="abs txt tr" style="left:932px;width:71.5px;top:319px;line-height:12px;text-align:right">0.00</div>
<div class="abs txt tr" style="left:1005px;width:85.5px;top:319px;line-height:12px;text-align:right">1 696.00</div>
<div class="abs" style="left:13px;top:331px;width:1079px;height:12px;background:#ffffff"></div>
<div class="abs" style="left:13px;top:331px;width:1079px;height:1px;background:#dedede"></div>
<div class="abs" style="left:108px;top:331px;width:1px;height:12px;background:#dcdcdc"></div>
<div class="abs" style="left:270px;top:331px;width:1px;height:12px;background:#dcdcdc"></div>
<div class="abs" style="left:344px;top:331px;width:1px;height:12px;background:#dcdcdc"></div>
<div class="abs" style="left:403px;top:331px;width:1px;height:12px;background:#dcdcdc"></div>
<div class="abs" style="left:476.7px;top:331px;width:1px;height:12px;background:#dcdcdc"></div>
<div class="abs" style="left:550px;top:331px;width:1px;height:12px;background:#dcdcdc"></div>
<div class="abs" style="left:623px;top:331px;width:1px;height:12px;background:#dcdcdc"></div>
<div class="abs" style="left:696px;top:331px;width:1px;height:12px;background:#dcdcdc"></div>
<div class="abs" style="left:858px;top:331px;width:1px;height:12px;background:#dcdcdc"></div>
<div class="abs" style="left:932px;top:331px;width:1px;height:12px;background:#dcdcdc"></div>
<div class="abs" style="left:1005px;top:331px;width:1px;height:12px;background:#dcdcdc"></div>
<svg class="abs" style="left:14px;top:332.5px" width="11" height="11" viewBox="0 0 11 11"><path d="M1.6 1.2H5.6L8.2 3.8V8.8H1.6Z" fill="#fafafa" stroke="#7a7a7a" stroke-width="0.75"/><path d="M5.6 1.2V3.8H8.2" fill="none" stroke="#9a9a9a" stroke-width="0.6"/><circle cx="7.3" cy="7.3" r="2.4" fill="#c8462a"/></svg>
<div class="abs txt tl" style="left:26.6px;top:331px;line-height:12px">32144266</div>
<div class="abs txt tr" style="left:108px;width:160.5px;top:331px;line-height:12px;text-align:right">2020.09.25 00:01:52</div>
<div class="abs txt tr" style="left:270px;width:72.5px;top:331px;line-height:12px;text-align:right">sell</div>
<div class="abs txt tr" style="left:344px;width:57.5px;top:331px;line-height:12px;text-align:right">1.00</div>
<div class="abs txt tr" style="left:403px;width:72.19999999999999px;top:331px;line-height:12px;text-align:right">gbpusd.exp</div>
<div class="abs txt tr" style="left:476.7px;width:71.80000000000001px;top:331px;line-height:12px;text-align:right">1.27524</div>
<div class="abs txt tr" style="left:550px;width:71.5px;top:331px;line-height:12px;text-align:right">1.27799</div>
<div class="abs txt tr" style="left:623px;width:71.5px;top:331px;line-height:12px;text-align:right">0.00000</div>
<div class="abs txt tr" style="left:696px;width:160.5px;top:331px;line-height:12px;text-align:right">2020.09.25 00:12:07</div>
<div class="abs txt tr" style="left:858px;width:72.5px;top:331px;line-height:12px;text-align:right">1.27535</div>
<div class="abs txt tr" style="left:932px;width:71.5px;top:331px;line-height:12px;text-align:right">0.00</div>
<div class="abs txt tr" style="left:1005px;width:85.5px;top:331px;line-height:12px;text-align:right">-11.00</div>
<div class="abs" style="left:13px;top:343px;width:1079px;height:12px;background:#ebebeb"></div>
<div class="abs" style="left:13px;top:343px;width:1079px;height:1px;background:#dedede"></div>
<div class="abs" style="left:108px;top:343px;width:1px;height:12px;background:#dcdcdc"></div>
<div class="abs" style="left:270px;top:343px;width:1px;height:12px;background:#dcdcdc"></div>
<div class="abs" style="left:344px;top:343px;width:1px;height:12px;background:#dcdcdc"></div>
<div class="abs" style="left:403px;top:343px;width:1px;height:12px;background:#dcdcdc"></div>
<div class="abs" style="left:476.7px;top:343px;width:1px;height:12px;background:#dcdcdc"></div>
<div class="abs" style="left:550px;top:343px;width:1px;height:12px;background:#dcdcdc"></div>
<div class="abs" style="left:623px;top:343px;width:1px;height:12px;background:#dcdcdc"></div>
<div class="abs" style="left:696px;top:343px;width:1px;height:12px;background:#dcdcdc"></div>
<div class="abs" style="left:858px;top:343px;width:1px;height:12px;background:#dcdcdc"></div>
<div class="abs" style="left:932px;top:343px;width:1px;height:12px;background:#dcdcdc"></div>
<div class="abs" style="left:1005px;top:343px;width:1px;height:12px;background:#dcdcdc"></div>
<svg class="abs" style="left:14px;top:344.5px" width="11" height="11" viewBox="0 0 11 11"><path d="M1.6 1.2H5.6L8.2 3.8V8.8H1.6Z" fill="#fafafa" stroke="#7a7a7a" stroke-width="0.75"/><path d="M5.6 1.2V3.8H8.2" fill="none" stroke="#9a9a9a" stroke-width="0.6"/><circle cx="7.3" cy="7.3" r="2.4" fill="#c8462a"/></svg>
<div class="abs txt tl" style="left:26.6px;top:343px;line-height:12px">32144312</div>
<div class="abs txt tr" style="left:108px;width:160.5px;top:343px;line-height:12px;text-align:right">2020.09.25 00:12:24</div>
<div class="abs txt tr" style="left:270px;width:72.5px;top:343px;line-height:12px;text-align:right">sell</div>
<div class="abs txt tr" style="left:344px;width:57.5px;top:343px;line-height:12px;text-align:right">2.00</div>
<div class="abs txt tr" style="left:403px;width:72.19999999999999px;top:343px;line-height:12px;text-align:right">gbpusd.exp</div>
<div class="abs txt tr" style="left:476.7px;width:71.80000000000001px;top:343px;line-height:12px;text-align:right">1.27523</div>
<div class="abs txt tr" style="left:550px;width:71.5px;top:343px;line-height:12px;text-align:right">0.00000</div>
<div class="abs txt tr" style="left:623px;width:71.5px;top:343px;line-height:12px;text-align:right">0.00000</div>
<div class="abs txt tr" style="left:696px;width:160.5px;top:343px;line-height:12px;text-align:right">2020.09.25 00:17:52</div>
<div class="abs txt tr" style="left:858px;width:72.5px;top:343px;line-height:12px;text-align:right">1.27530</div>
<div class="abs txt tr" style="left:932px;width:71.5px;top:343px;line-height:12px;text-align:right">0.00</div>
<div class="abs txt tr" style="left:1005px;width:85.5px;top:343px;line-height:12px;text-align:right">-14.00</div>
<div class="abs" style="left:13px;top:355px;width:1079px;height:12px;background:#ffffff"></div>
<div class="abs" style="left:13px;top:355px;width:1079px;height:1px;background:#dedede"></div>
<div class="abs" style="left:108px;top:355px;width:1px;height:12px;background:#dcdcdc"></div>
<div class="abs" style="left:270px;top:355px;width:1px;height:12px;background:#dcdcdc"></div>
<div class="abs" style="left:344px;top:355px;width:1px;height:12px;background:#dcdcdc"></div>
<div class="abs" style="left:403px;top:355px;width:1px;height:12px;background:#dcdcdc"></div>
<div class="abs" style="left:476.7px;top:355px;width:1px;height:12px;background:#dcdcdc"></div>
<div class="abs" style="left:550px;top:355px;width:1px;height:12px;background:#dcdcdc"></div>
<div class="abs" style="left:623px;top:355px;width:1px;height:12px;background:#dcdcdc"></div>
<div class="abs" style="left:696px;top:355px;width:1px;height:12px;background:#dcdcdc"></div>
<div class="abs" style="left:858px;top:355px;width:1px;height:12px;background:#dcdcdc"></div>
<div class="abs" style="left:932px;top:355px;width:1px;height:12px;background:#dcdcdc"></div>
<div class="abs" style="left:1005px;top:355px;width:1px;height:12px;background:#dcdcdc"></div>
<svg class="abs" style="left:14px;top:356.5px" width="11" height="11" viewBox="0 0 11 11"><path d="M1.6 1.2H5.6L8.2 3.8V8.8H1.6Z" fill="#fafafa" stroke="#7a7a7a" stroke-width="0.75"/><path d="M5.6 1.2V3.8H8.2" fill="none" stroke="#9a9a9a" stroke-width="0.6"/><circle cx="7.3" cy="7.3" r="2.4" fill="#c8462a"/></svg>
<div class="abs txt tl" style="left:26.6px;top:355px;line-height:12px">32144315</div>
<div class="abs txt tr" style="left:108px;width:160.5px;top:355px;line-height:12px;text-align:right">2020.09.25 00:12:44</div>
<div class="abs txt tr" style="left:270px;width:72.5px;top:355px;line-height:12px;text-align:right">sell</div>
<div class="abs txt tr" style="left:344px;width:57.5px;top:355px;line-height:12px;text-align:right">2.00</div>
<div class="abs txt tr" style="left:403px;width:72.19999999999999px;top:355px;line-height:12px;text-align:right">eurusd.exp</div>
<div class="abs txt tr" style="left:476.7px;width:71.80000000000001px;top:355px;line-height:12px;text-align:right">1.16685</div>
<div class="abs txt tr" style="left:550px;width:71.5px;top:355px;line-height:12px;text-align:right">0.00000</div>
<div class="abs txt tr" style="left:623px;width:71.5px;top:355px;line-height:12px;text-align:right">0.00000</div>
<div class="abs txt tr" style="left:696px;width:160.5px;top:355px;line-height:12px;text-align:right">2020.09.25 00:17:52</div>
<div class="abs txt tr" style="left:858px;width:72.5px;top:355px;line-height:12px;text-align:right">1.16688</div>
<div class="abs txt tr" style="left:932px;width:71.5px;top:355px;line-height:12px;text-align:right">0.00</div>
<div class="abs txt tr" style="left:1005px;width:85.5px;top:355px;line-height:12px;text-align:right">-6.00</div>
<div class="abs" style="left:13px;top:367px;width:1079px;height:12px;background:#ebebeb"></div>
<div class="abs" style="left:13px;top:367px;width:1079px;height:1px;background:#dedede"></div>
<div class="abs" style="left:108px;top:367px;width:1px;height:12px;background:#dcdcdc"></div>
<div class="abs" style="left:270px;top:367px;width:1px;height:12px;background:#dcdcdc"></div>
<div class="abs" style="left:344px;top:367px;width:1px;height:12px;background:#dcdcdc"></div>
<div class="abs" style="left:403px;top:367px;width:1px;height:12px;background:#dcdcdc"></div>
<div class="abs" style="left:476.7px;top:367px;width:1px;height:12px;background:#dcdcdc"></div>
<div class="abs" style="left:550px;top:367px;width:1px;height:12px;background:#dcdcdc"></div>
<div class="abs" style="left:623px;top:367px;width:1px;height:12px;background:#dcdcdc"></div>
<div class="abs" style="left:696px;top:367px;width:1px;height:12px;background:#dcdcdc"></div>
<div class="abs" style="left:858px;top:367px;width:1px;height:12px;background:#dcdcdc"></div>
<div class="abs" style="left:932px;top:367px;width:1px;height:12px;background:#dcdcdc"></div>
<div class="abs" style="left:1005px;top:367px;width:1px;height:12px;background:#dcdcdc"></div>
<svg class="abs" style="left:14px;top:368.5px" width="11" height="11" viewBox="0 0 11 11"><path d="M1.6 1.2H5.6L8.2 3.8V8.8H1.6Z" fill="#fafafa" stroke="#7a7a7a" stroke-width="0.75"/><path d="M5.6 1.2V3.8H8.2" fill="none" stroke="#9a9a9a" stroke-width="0.6"/><circle cx="7.3" cy="7.3" r="2.4" fill="#2c84bc"/></svg>
<div class="abs txt tl" style="left:26.6px;top:367px;line-height:12px">32144338</div>
<div class="abs txt tr" style="left:108px;width:160.5px;top:367px;line-height:12px;text-align:right">2020.09.25 00:17:59</div>
<div class="abs txt tr" style="left:270px;width:72.5px;top:367px;line-height:12px;text-align:right">buy</div>
<div class="abs txt tr" style="left:344px;width:57.5px;top:367px;line-height:12px;text-align:right">2.00</div>
<div class="abs txt tr" style="left:403px;width:72.19999999999999px;top:367px;line-height:12px;text-align:right">eurusd.exp</div>
<div class="abs txt tr" style="left:476.7px;width:71.80000000000001px;top:367px;line-height:12px;text-align:right">1.16690</div>
<div class="abs txt tr" style="left:550px;width:71.5px;top:367px;line-height:12px;text-align:right">0.00000</div>
<div class="abs txt tr" style="left:623px;width:71.5px;top:367px;line-height:12px;text-align:right">0.00000</div>
<div class="abs txt tr" style="left:696px;width:160.5px;top:367px;line-height:12px;text-align:right">2020.09.25 00:24:42</div>
<div class="abs txt tr" style="left:858px;width:72.5px;top:367px;line-height:12px;text-align:right">1.16638</div>
<div class="abs txt tr" style="left:932px;width:71.5px;top:367px;line-height:12px;text-align:right">0.00</div>
<div class="abs txt tr" style="left:1005px;width:85.5px;top:367px;line-height:12px;text-align:right">-104.00</div>
<div class="abs" style="left:13px;top:379px;width:1079px;height:12px;background:#ffffff"></div>
<div class="abs" style="left:13px;top:379px;width:1079px;height:1px;background:#dedede"></div>
<div class="abs" style="left:108px;top:379px;width:1px;height:12px;background:#dcdcdc"></div>
<div class="abs" style="left:270px;top:379px;width:1px;height:12px;background:#dcdcdc"></div>
<div class="abs" style="left:344px;top:379px;width:1px;height:12px;background:#dcdcdc"></div>
<div class="abs" style="left:403px;top:379px;width:1px;height:12px;background:#dcdcdc"></div>
<div class="abs" style="left:476.7px;top:379px;width:1px;height:12px;background:#dcdcdc"></div>
<div class="abs" style="left:550px;top:379px;width:1px;height:12px;background:#dcdcdc"></div>
<div class="abs" style="left:623px;top:379px;width:1px;height:12px;background:#dcdcdc"></div>
<div class="abs" style="left:696px;top:379px;width:1px;height:12px;background:#dcdcdc"></div>
<div class="abs" style="left:858px;top:379px;width:1px;height:12px;background:#dcdcdc"></div>
<div class="abs" style="left:932px;top:379px;width:1px;height:12px;background:#dcdcdc"></div>
<div class="abs" style="left:1005px;top:379px;width:1px;height:12px;background:#dcdcdc"></div>
<svg class="abs" style="left:14px;top:380.5px" width="11" height="11" viewBox="0 0 11 11"><path d="M1.6 1.2H5.6L8.2 3.8V8.8H1.6Z" fill="#fafafa" stroke="#7a7a7a" stroke-width="0.75"/><path d="M5.6 1.2V3.8H8.2" fill="none" stroke="#9a9a9a" stroke-width="0.6"/><circle cx="7.3" cy="7.3" r="2.4" fill="#2c84bc"/></svg>
<div class="abs txt tl" style="left:26.6px;top:379px;line-height:12px">32144339</div>
<div class="abs txt tr" style="left:108px;width:160.5px;top:379px;line-height:12px;text-align:right">2020.09.25 00:17:59</div>
<div class="abs txt tr" style="left:270px;width:72.5px;top:379px;line-height:12px;text-align:right">buy</div>
<div class="abs txt tr" style="left:344px;width:57.5px;top:379px;line-height:12px;text-align:right">2.00</div>
<div class="abs txt tr" style="left:403px;width:72.19999999999999px;top:379px;line-height:12px;text-align:right">gbpusd.exp</div>
<div class="abs txt tr" style="left:476.7px;width:71.80000000000001px;top:379px;line-height:12px;text-align:right">1.27534</div>
<div class="abs txt tr" style="left:550px;width:71.5px;top:379px;line-height:12px;text-align:right">0.00000</div>
<div class="abs txt tr" style="left:623px;width:71.5px;top:379px;line-height:12px;text-align:right">0.00000</div>
<div class="abs txt tr" style="left:696px;width:160.5px;top:379px;line-height:12px;text-align:right">2020.09.25 00:24:42</div>
<div class="abs txt tr" style="left:858px;width:72.5px;top:379px;line-height:12px;text-align:right">1.27482</div>
<div class="abs txt tr" style="left:932px;width:71.5px;top:379px;line-height:12px;text-align:right">0.00</div>
<div class="abs txt tr" style="left:1005px;width:85.5px;top:379px;line-height:12px;text-align:right">-104.00</div>
<div class="abs" style="left:13px;top:391px;width:1079px;height:12px;background:#ebebeb"></div>
<div class="abs" style="left:13px;top:391px;width:1079px;height:1px;background:#dedede"></div>
<div class="abs" style="left:108px;top:391px;width:1px;height:12px;background:#dcdcdc"></div>
<div class="abs" style="left:270px;top:391px;width:1px;height:12px;background:#dcdcdc"></div>
<div class="abs" style="left:344px;top:391px;width:1px;height:12px;background:#dcdcdc"></div>
<div class="abs" style="left:403px;top:391px;width:1px;height:12px;background:#dcdcdc"></div>
<div class="abs" style="left:476.7px;top:391px;width:1px;height:12px;background:#dcdcdc"></div>
<div class="abs" style="left:550px;top:391px;width:1px;height:12px;background:#dcdcdc"></div>
<div class="abs" style="left:623px;top:391px;width:1px;height:12px;background:#dcdcdc"></div>
<div class="abs" style="left:696px;top:391px;width:1px;height:12px;background:#dcdcdc"></div>
<div class="abs" style="left:858px;top:391px;width:1px;height:12px;background:#dcdcdc"></div>
<div class="abs" style="left:932px;top:391px;width:1px;height:12px;background:#dcdcdc"></div>
<div class="abs" style="left:1005px;top:391px;width:1px;height:12px;background:#dcdcdc"></div>
<svg class="abs" style="left:14px;top:392.5px" width="11" height="11" viewBox="0 0 11 11"><path d="M1.6 1.2H5.6L8.2 3.8V8.8H1.6Z" fill="#fafafa" stroke="#7a7a7a" stroke-width="0.75"/><path d="M5.6 1.2V3.8H8.2" fill="none" stroke="#9a9a9a" stroke-width="0.6"/><circle cx="7.3" cy="7.3" r="2.4" fill="#c8462a"/></svg>
<div class="abs txt tl" style="left:26.6px;top:391px;line-height:12px">32144346</div>
<div class="abs txt tr" style="left:108px;width:160.5px;top:391px;line-height:12px;text-align:right">2020.09.25 00:18:29</div>
<div class="abs txt tr" style="left:270px;width:72.5px;top:391px;line-height:12px;text-align:right">sell</div>
<div class="abs txt tr" style="left:344px;width:57.5px;top:391px;line-height:12px;text-align:right">2.00</div>
<div class="abs txt tr" style="left:403px;width:72.19999999999999px;top:391px;line-height:12px;text-align:right">usdcad.exp</div>
<div class="abs txt tr" style="left:476.7px;width:71.80000000000001px;top:391px;line-height:12px;text-align:right">1.33450</div>
<div class="abs txt tr" style="left:550px;width:71.5px;top:391px;line-height:12px;text-align:right">0.00000</div>
<div class="abs txt tr" style="left:623px;width:71.5px;top:391px;line-height:12px;text-align:right">0.00000</div>
<div class="abs txt tr" style="left:696px;width:160.5px;top:391px;line-height:12px;text-align:right">2020.09.25 00:24:41</div>
<div class="abs txt tr" style="left:858px;width:72.5px;top:391px;line-height:12px;text-align:right">1.33532</div>
<div class="abs txt tr" style="left:932px;width:71.5px;top:391px;line-height:12px;text-align:right">0.00</div>
<div class="abs txt tr" style="left:1005px;width:85.5px;top:391px;line-height:12px;text-align:right">-122.82</div>
<div class="abs" style="left:13px;top:403px;width:1079px;height:12px;background:#ffffff"></div>
<div class="abs" style="left:13px;top:403px;width:1079px;height:1px;background:#dedede"></div>
<div class="abs" style="left:108px;top:403px;width:1px;height:12px;background:#dcdcdc"></div>
<div class="abs" style="left:270px;top:403px;width:1px;height:12px;background:#dcdcdc"></div>
<div class="abs" style="left:344px;top:403px;width:1px;height:12px;background:#dcdcdc"></div>
<div class="abs" style="left:403px;top:403px;width:1px;height:12px;background:#dcdcdc"></div>
<div class="abs" style="left:476.7px;top:403px;width:1px;height:12px;background:#dcdcdc"></div>
<div class="abs" style="left:550px;top:403px;width:1px;height:12px;background:#dcdcdc"></div>
<div class="abs" style="left:623px;top:403px;width:1px;height:12px;background:#dcdcdc"></div>
<div class="abs" style="left:696px;top:403px;width:1px;height:12px;background:#dcdcdc"></div>
<div class="abs" style="left:858px;top:403px;width:1px;height:12px;background:#dcdcdc"></div>
<div class="abs" style="left:932px;top:403px;width:1px;height:12px;background:#dcdcdc"></div>
<div class="abs" style="left:1005px;top:403px;width:1px;height:12px;background:#dcdcdc"></div>
<svg class="abs" style="left:14px;top:404.5px" width="11" height="11" viewBox="0 0 11 11"><path d="M1.6 1.2H5.6L8.2 3.8V8.8H1.6Z" fill="#fafafa" stroke="#7a7a7a" stroke-width="0.75"/><path d="M5.6 1.2V3.8H8.2" fill="none" stroke="#9a9a9a" stroke-width="0.6"/><circle cx="7.3" cy="7.3" r="2.4" fill="#c8462a"/></svg>
<div class="abs txt tl" style="left:26.6px;top:403px;line-height:12px">32144401</div>
<div class="abs txt tr" style="left:108px;width:160.5px;top:403px;line-height:12px;text-align:right">2020.09.25 00:26:02</div>
<div class="abs txt tr" style="left:270px;width:72.5px;top:403px;line-height:12px;text-align:right">sell</div>
<div class="abs txt tr" style="left:344px;width:57.5px;top:403px;line-height:12px;text-align:right">2.00</div>
<div class="abs txt tr" style="left:403px;width:72.19999999999999px;top:403px;line-height:12px;text-align:right">gbpusd.exp</div>
<div class="abs txt tr" style="left:476.7px;width:71.80000000000001px;top:403px;line-height:12px;text-align:right">1.27485</div>
<div class="abs txt tr" style="left:550px;width:71.5px;top:403px;line-height:12px;text-align:right">0.00000</div>
<div class="abs txt tr" style="left:623px;width:71.5px;top:403px;line-height:12px;text-align:right">0.00000</div>
<div class="abs txt tr" style="left:696px;width:160.5px;top:403px;line-height:12px;text-align:right">2020.09.25 00:31:25</div>
<div class="abs txt tr" style="left:858px;width:72.5px;top:403px;line-height:12px;text-align:right">1.27498</div>
<div class="abs txt tr" style="left:932px;width:71.5px;top:403px;line-height:12px;text-align:right">0.00</div>
<div class="abs txt tr" style="left:1005px;width:85.5px;top:403px;line-height:12px;text-align:right">-26.00</div>
<div class="abs" style="left:13px;top:415px;width:1079px;height:12px;background:#ebebeb"></div>
<div class="abs" style="left:13px;top:415px;width:1079px;height:1px;background:#dedede"></div>
<div class="abs" style="left:108px;top:415px;width:1px;height:12px;background:#dcdcdc"></div>
<div class="abs" style="left:270px;top:415px;width:1px;height:12px;background:#dcdcdc"></div>
<div class="abs" style="left:344px;top:415px;width:1px;height:12px;background:#dcdcdc"></div>
<div class="abs" style="left:403px;top:415px;width:1px;height:12px;background:#dcdcdc"></div>
<div class="abs" style="left:476.7px;top:415px;width:1px;height:12px;background:#dcdcdc"></div>
<div class="abs" style="left:550px;top:415px;width:1px;height:12px;background:#dcdcdc"></div>
<div class="abs" style="left:623px;top:415px;width:1px;height:12px;background:#dcdcdc"></div>
<div class="abs" style="left:696px;top:415px;width:1px;height:12px;background:#dcdcdc"></div>
<div class="abs" style="left:858px;top:415px;width:1px;height:12px;background:#dcdcdc"></div>
<div class="abs" style="left:932px;top:415px;width:1px;height:12px;background:#dcdcdc"></div>
<div class="abs" style="left:1005px;top:415px;width:1px;height:12px;background:#dcdcdc"></div>
<svg class="abs" style="left:14px;top:416.5px" width="11" height="11" viewBox="0 0 11 11"><path d="M1.6 1.2H5.6L8.2 3.8V8.8H1.6Z" fill="#fafafa" stroke="#7a7a7a" stroke-width="0.75"/><path d="M5.6 1.2V3.8H8.2" fill="none" stroke="#9a9a9a" stroke-width="0.6"/><circle cx="7.3" cy="7.3" r="2.4" fill="#c8462a"/></svg>
<div class="abs txt tl" style="left:26.6px;top:415px;line-height:12px">32144402</div>
<div class="abs txt tr" style="left:108px;width:160.5px;top:415px;line-height:12px;text-align:right">2020.09.25 00:26:03</div>
<div class="abs txt tr" style="left:270px;width:72.5px;top:415px;line-height:12px;text-align:right">sell</div>
<div class="abs txt tr" style="left:344px;width:57.5px;top:415px;line-height:12px;text-align:right">2.00</div>
<div class="abs txt tr" style="left:403px;width:72.19999999999999px;top:415px;line-height:12px;text-align:right">eurusd.exp</div>
<div class="abs txt tr" style="left:476.7px;width:71.80000000000001px;top:415px;line-height:12px;text-align:right">1.16638</div>
<div class="abs txt tr" style="left:550px;width:71.5px;top:415px;line-height:12px;text-align:right">0.00000</div>
<div class="abs txt tr" style="left:623px;width:71.5px;top:415px;line-height:12px;text-align:right">0.00000</div>
<div class="abs txt tr" style="left:696px;width:160.5px;top:415px;line-height:12px;text-align:right">2020.09.25 00:31:25</div>
<div class="abs txt tr" style="left:858px;width:72.5px;top:415px;line-height:12px;text-align:right">1.16641</div>
<div class="abs txt tr" style="left:932px;width:71.5px;top:415px;line-height:12px;text-align:right">0.00</div>
<div class="abs txt tr" style="left:1005px;width:85.5px;top:415px;line-height:12px;text-align:right">-6.00</div>
<div class="abs" style="left:13px;top:427px;width:1079px;height:12px;background:#ffffff"></div>
<div class="abs" style="left:13px;top:427px;width:1079px;height:1px;background:#dedede"></div>
<div class="abs" style="left:108px;top:427px;width:1px;height:12px;background:#dcdcdc"></div>
<div class="abs" style="left:270px;top:427px;width:1px;height:12px;background:#dcdcdc"></div>
<div class="abs" style="left:344px;top:427px;width:1px;height:12px;background:#dcdcdc"></div>
<div class="abs" style="left:403px;top:427px;width:1px;height:12px;background:#dcdcdc"></div>
<div class="abs" style="left:476.7px;top:427px;width:1px;height:12px;background:#dcdcdc"></div>
<div class="abs" style="left:550px;top:427px;width:1px;height:12px;background:#dcdcdc"></div>
<div class="abs" style="left:623px;top:427px;width:1px;height:12px;background:#dcdcdc"></div>
<div class="abs" style="left:696px;top:427px;width:1px;height:12px;background:#dcdcdc"></div>
<div class="abs" style="left:858px;top:427px;width:1px;height:12px;background:#dcdcdc"></div>
<div class="abs" style="left:932px;top:427px;width:1px;height:12px;background:#dcdcdc"></div>
<div class="abs" style="left:1005px;top:427px;width:1px;height:12px;background:#dcdcdc"></div>
<svg class="abs" style="left:14px;top:428.5px" width="11" height="11" viewBox="0 0 11 11"><path d="M1.6 1.2H5.6L8.2 3.8V8.8H1.6Z" fill="#fafafa" stroke="#7a7a7a" stroke-width="0.75"/><path d="M5.6 1.2V3.8H8.2" fill="none" stroke="#9a9a9a" stroke-width="0.6"/><circle cx="7.3" cy="7.3" r="2.4" fill="#2c84bc"/></svg>
<div class="abs txt tl" style="left:26.6px;top:427px;line-height:12px">32144403</div>
<div class="abs txt tr" style="left:108px;width:160.5px;top:427px;line-height:12px;text-align:right">2020.09.25 00:26:04</div>
<div class="abs txt tr" style="left:270px;width:72.5px;top:427px;line-height:12px;text-align:right">buy</div>
<div class="abs txt tr" style="left:344px;width:57.5px;top:427px;line-height:12px;text-align:right">2.00</div>
<div class="abs txt tr" style="left:403px;width:72.19999999999999px;top:427px;line-height:12px;text-align:right">usdcad.exp</div>
<div class="abs txt tr" style="left:476.7px;width:71.80000000000001px;top:427px;line-height:12px;text-align:right">1.33536</div>
<div class="abs txt tr" style="left:550px;width:71.5px;top:427px;line-height:12px;text-align:right">0.00000</div>
<div class="abs txt tr" style="left:623px;width:71.5px;top:427px;line-height:12px;text-align:right">0.00000</div>
<div class="abs txt tr" style="left:696px;width:160.5px;top:427px;line-height:12px;text-align:right">2020.09.25 00:31:24</div>
<div class="abs txt tr" style="left:858px;width:72.5px;top:427px;line-height:12px;text-align:right">1.33527</div>
<div class="abs txt tr" style="left:932px;width:71.5px;top:427px;line-height:12px;text-align:right">0.00</div>
<div class="abs txt tr" style="left:1005px;width:85.5px;top:427px;line-height:12px;text-align:right">-13.48</div>
<div class="abs" style="left:13px;top:439px;width:1079px;height:12px;background:#ebebeb"></div>
<div class="abs" style="left:13px;top:439px;width:1079px;height:1px;background:#dedede"></div>
<div class="abs" style="left:108px;top:439px;width:1px;height:12px;background:#dcdcdc"></div>
<div class="abs" style="left:270px;top:439px;width:1px;height:12px;background:#dcdcdc"></div>
<div class="abs" style="left:344px;top:439px;width:1px;height:12px;background:#dcdcdc"></div>
<div class="abs" style="left:403px;top:439px;width:1px;height:12px;background:#dcdcdc"></div>
<div class="abs" style="left:476.7px;top:439px;width:1px;height:12px;background:#dcdcdc"></div>
<div class="abs" style="left:550px;top:439px;width:1px;height:12px;background:#dcdcdc"></div>
<div class="abs" style="left:623px;top:439px;width:1px;height:12px;background:#dcdcdc"></div>
<div class="abs" style="left:696px;top:439px;width:1px;height:12px;background:#dcdcdc"></div>
<div class="abs" style="left:858px;top:439px;width:1px;height:12px;background:#dcdcdc"></div>
<div class="abs" style="left:932px;top:439px;width:1px;height:12px;background:#dcdcdc"></div>
<div class="abs" style="left:1005px;top:439px;width:1px;height:12px;background:#dcdcdc"></div>
<svg class="abs" style="left:14px;top:440.5px" width="11" height="11" viewBox="0 0 11 11"><path d="M1.6 1.2H5.6L8.2 3.8V8.8H1.6Z" fill="#fafafa" stroke="#7a7a7a" stroke-width="0.75"/><path d="M5.6 1.2V3.8H8.2" fill="none" stroke="#9a9a9a" stroke-width="0.6"/><circle cx="7.3" cy="7.3" r="2.4" fill="#2c84bc"/></svg>
<div class="abs txt tl" style="left:26.6px;top:439px;line-height:12px">32144405</div>
<div class="abs txt tr" style="left:108px;width:160.5px;top:439px;line-height:12px;text-align:right">2020.09.25 00:26:45</div>
<div class="abs txt tr" style="left:270px;width:72.5px;top:439px;line-height:12px;text-align:right">buy</div>
<div class="abs txt tr" style="left:344px;width:57.5px;top:439px;line-height:12px;text-align:right">2.00</div>
<div class="abs txt tr" style="left:403px;width:72.19999999999999px;top:439px;line-height:12px;text-align:right">xauusd.exp</div>
<div class="abs txt tr" style="left:476.7px;width:71.80000000000001px;top:439px;line-height:12px;text-align:right">1865.64</div>
<div class="abs txt tr" style="left:550px;width:71.5px;top:439px;line-height:12px;text-align:right">0.00</div>
<div class="abs txt tr" style="left:623px;width:71.5px;top:439px;line-height:12px;text-align:right">0.00</div>
<div class="abs txt tr" style="left:696px;width:160.5px;top:439px;line-height:12px;text-align:right">2020.09.25 00:33:12</div>
<div class="abs txt tr" style="left:858px;width:72.5px;top:439px;line-height:12px;text-align:right">1865.70</div>
<div class="abs txt tr" style="left:932px;width:71.5px;top:439px;line-height:12px;text-align:right">0.00</div>
<div class="abs txt tr" style="left:1005px;width:85.5px;top:439px;line-height:12px;text-align:right">12.00</div>
<div class="abs" style="left:13px;top:451px;width:1079px;height:12px;background:#ffffff"></div>
<div class="abs" style="left:13px;top:451px;width:1079px;height:1px;background:#dedede"></div>
<div class="abs" style="left:108px;top:451px;width:1px;height:12px;background:#dcdcdc"></div>
<div class="abs" style="left:270px;top:451px;width:1px;height:12px;background:#dcdcdc"></div>
<div class="abs" style="left:344px;top:451px;width:1px;height:12px;background:#dcdcdc"></div>
<div class="abs" style="left:403px;top:451px;width:1px;height:12px;background:#dcdcdc"></div>
<div class="abs" style="left:476.7px;top:451px;width:1px;height:12px;background:#dcdcdc"></div>
<div class="abs" style="left:550px;top:451px;width:1px;height:12px;background:#dcdcdc"></div>
<div class="abs" style="left:623px;top:451px;width:1px;height:12px;background:#dcdcdc"></div>
<div class="abs" style="left:696px;top:451px;width:1px;height:12px;background:#dcdcdc"></div>
<div class="abs" style="left:858px;top:451px;width:1px;height:12px;background:#dcdcdc"></div>
<div class="abs" style="left:932px;top:451px;width:1px;height:12px;background:#dcdcdc"></div>
<div class="abs" style="left:1005px;top:451px;width:1px;height:12px;background:#dcdcdc"></div>
<svg class="abs" style="left:14px;top:452.5px" width="11" height="11" viewBox="0 0 11 11"><path d="M1.6 1.2H5.6L8.2 3.8V8.8H1.6Z" fill="#fafafa" stroke="#7a7a7a" stroke-width="0.75"/><path d="M5.6 1.2V3.8H8.2" fill="none" stroke="#9a9a9a" stroke-width="0.6"/><circle cx="7.3" cy="7.3" r="2.4" fill="#c8462a"/></svg>
<div class="abs txt tl" style="left:26.6px;top:451px;line-height:12px">32144725</div>
<div class="abs txt tr" style="left:108px;width:160.5px;top:451px;line-height:12px;text-align:right">2020.09.25 01:18:53</div>
<div class="abs txt tr" style="left:270px;width:72.5px;top:451px;line-height:12px;text-align:right">sell</div>
<div class="abs txt tr" style="left:344px;width:57.5px;top:451px;line-height:12px;text-align:right">10.00</div>
<div class="abs txt tr" style="left:403px;width:72.19999999999999px;top:451px;line-height:12px;text-align:right">nq100.exp</div>
<div class="abs txt tr" style="left:476.7px;width:71.80000000000001px;top:451px;line-height:12px;text-align:right">10978.3</div>
<div class="abs txt tr" style="left:550px;width:71.5px;top:451px;line-height:12px;text-align:right">0.0</div>
<div class="abs txt tr" style="left:623px;width:71.5px;top:451px;line-height:12px;text-align:right">0.0</div>
<div class="abs txt tr" style="left:696px;width:160.5px;top:451px;line-height:12px;text-align:right">2020.09.25 01:20:29</div>
<div class="abs txt tr" style="left:858px;width:72.5px;top:451px;line-height:12px;text-align:right">10984.2</div>
<div class="abs txt tr" style="left:932px;width:71.5px;top:451px;line-height:12px;text-align:right">0.00</div>
<div class="abs txt tr" style="left:1005px;width:85.5px;top:451px;line-height:12px;text-align:right">-1 180.00</div>
<div class="abs" style="left:13px;top:463px;width:1079px;height:12px;background:#ebebeb"></div>
<div class="abs" style="left:13px;top:463px;width:1079px;height:1px;background:#dedede"></div>
<div class="abs" style="left:108px;top:463px;width:1px;height:12px;background:#dcdcdc"></div>
<div class="abs" style="left:270px;top:463px;width:1px;height:12px;background:#dcdcdc"></div>
<div class="abs" style="left:344px;top:463px;width:1px;height:12px;background:#dcdcdc"></div>
<div class="abs" style="left:403px;top:463px;width:1px;height:12px;background:#dcdcdc"></div>
<div class="abs" style="left:476.7px;top:463px;width:1px;height:12px;background:#dcdcdc"></div>
<div class="abs" style="left:550px;top:463px;width:1px;height:12px;background:#dcdcdc"></div>
<div class="abs" style="left:623px;top:463px;width:1px;height:12px;background:#dcdcdc"></div>
<div class="abs" style="left:696px;top:463px;width:1px;height:12px;background:#dcdcdc"></div>
<div class="abs" style="left:858px;top:463px;width:1px;height:12px;background:#dcdcdc"></div>
<div class="abs" style="left:932px;top:463px;width:1px;height:12px;background:#dcdcdc"></div>
<div class="abs" style="left:1005px;top:463px;width:1px;height:12px;background:#dcdcdc"></div>
<svg class="abs" style="left:14px;top:464.5px" width="11" height="11" viewBox="0 0 11 11"><path d="M1.6 1.2H5.6L8.2 3.8V8.8H1.6Z" fill="#fafafa" stroke="#7a7a7a" stroke-width="0.75"/><path d="M5.6 1.2V3.8H8.2" fill="none" stroke="#9a9a9a" stroke-width="0.6"/><circle cx="7.3" cy="7.3" r="2.4" fill="#c8462a"/></svg>
<div class="abs txt tl" style="left:26.6px;top:463px;line-height:12px">32145787</div>
<div class="abs txt tr" style="left:108px;width:160.5px;top:463px;line-height:12px;text-align:right">2020.09.25 05:14:32</div>
<div class="abs txt tr" style="left:270px;width:72.5px;top:463px;line-height:12px;text-align:right">sell</div>
<div class="abs txt tr" style="left:344px;width:57.5px;top:463px;line-height:12px;text-align:right">0.10</div>
<div class="abs txt tr" style="left:403px;width:72.19999999999999px;top:463px;line-height:12px;text-align:right">xauusd.exp</div>
<div class="abs txt tr" style="left:476.7px;width:71.80000000000001px;top:463px;line-height:12px;text-align:right">1871.79</div>
<div class="abs txt tr" style="left:550px;width:71.5px;top:463px;line-height:12px;text-align:right">0.00</div>
<div class="abs txt tr" style="left:623px;width:71.5px;top:463px;line-height:12px;text-align:right">0.00</div>
<div class="abs txt tr" style="left:696px;width:160.5px;top:463px;line-height:12px;text-align:right">2020.09.25 05:27:05</div>
<div class="abs txt tr" style="left:858px;width:72.5px;top:463px;line-height:12px;text-align:right">1873.30</div>
<div class="abs txt tr" style="left:932px;width:71.5px;top:463px;line-height:12px;text-align:right">0.00</div>
<div class="abs txt tr" style="left:1005px;width:85.5px;top:463px;line-height:12px;text-align:right">-15.10</div>
<div class="abs" style="left:13px;top:475px;width:1079px;height:12px;background:#ffffff"></div>
<div class="abs" style="left:13px;top:475px;width:1079px;height:1px;background:#dedede"></div>
<div class="abs" style="left:108px;top:475px;width:1px;height:12px;background:#dcdcdc"></div>
<div class="abs" style="left:270px;top:475px;width:1px;height:12px;background:#dcdcdc"></div>
<div class="abs" style="left:344px;top:475px;width:1px;height:12px;background:#dcdcdc"></div>
<div class="abs" style="left:403px;top:475px;width:1px;height:12px;background:#dcdcdc"></div>
<div class="abs" style="left:476.7px;top:475px;width:1px;height:12px;background:#dcdcdc"></div>
<div class="abs" style="left:550px;top:475px;width:1px;height:12px;background:#dcdcdc"></div>
<div class="abs" style="left:623px;top:475px;width:1px;height:12px;background:#dcdcdc"></div>
<div class="abs" style="left:696px;top:475px;width:1px;height:12px;background:#dcdcdc"></div>
<div class="abs" style="left:858px;top:475px;width:1px;height:12px;background:#dcdcdc"></div>
<div class="abs" style="left:932px;top:475px;width:1px;height:12px;background:#dcdcdc"></div>
<div class="abs" style="left:1005px;top:475px;width:1px;height:12px;background:#dcdcdc"></div>
<svg class="abs" style="left:14px;top:476.5px" width="11" height="11" viewBox="0 0 11 11"><path d="M1.6 1.2H5.6L8.2 3.8V8.8H1.6Z" fill="#fafafa" stroke="#7a7a7a" stroke-width="0.75"/><path d="M5.6 1.2V3.8H8.2" fill="none" stroke="#9a9a9a" stroke-width="0.6"/><circle cx="7.3" cy="7.3" r="2.4" fill="#2c84bc"/></svg>
<div class="abs txt tl" style="left:26.6px;top:475px;line-height:12px">32145789</div>
<div class="abs txt tr" style="left:108px;width:160.5px;top:475px;line-height:12px;text-align:right">2020.09.25 05:22:14</div>
<div class="abs txt tr" style="left:270px;width:72.5px;top:475px;line-height:12px;text-align:right">buy</div>
<div class="abs txt tr" style="left:344px;width:57.5px;top:475px;line-height:12px;text-align:right">10.00</div>
<div class="abs txt tr" style="left:403px;width:72.19999999999999px;top:475px;line-height:12px;text-align:right">nq100.exp</div>
<div class="abs txt tr" style="left:476.7px;width:71.80000000000001px;top:475px;line-height:12px;text-align:right">10949.5</div>
<div class="abs txt tr" style="left:550px;width:71.5px;top:475px;line-height:12px;text-align:right">0.0</div>
<div class="abs txt tr" style="left:623px;width:71.5px;top:475px;line-height:12px;text-align:right">0.0</div>
<div class="abs txt tr" style="left:696px;width:160.5px;top:475px;line-height:12px;text-align:right">2020.09.25 05:31:43</div>
<div class="abs txt tr" style="left:858px;width:72.5px;top:475px;line-height:12px;text-align:right">10949.8</div>
<div class="abs txt tr" style="left:932px;width:71.5px;top:475px;line-height:12px;text-align:right">0.00</div>
<div class="abs txt tr" style="left:1005px;width:85.5px;top:475px;line-height:12px;text-align:right">60.00</div>
<div class="abs" style="left:13px;top:487px;width:1079px;height:12px;background:#ebebeb"></div>
<div class="abs" style="left:13px;top:487px;width:1079px;height:1px;background:#dedede"></div>
<div class="abs" style="left:108px;top:487px;width:1px;height:12px;background:#dcdcdc"></div>
<div class="abs" style="left:270px;top:487px;width:1px;height:12px;background:#dcdcdc"></div>
<div class="abs" style="left:344px;top:487px;width:1px;height:12px;background:#dcdcdc"></div>
<div class="abs" style="left:403px;top:487px;width:1px;height:12px;background:#dcdcdc"></div>
<div class="abs" style="left:476.7px;top:487px;width:1px;height:12px;background:#dcdcdc"></div>
<div class="abs" style="left:550px;top:487px;width:1px;height:12px;background:#dcdcdc"></div>
<div class="abs" style="left:623px;top:487px;width:1px;height:12px;background:#dcdcdc"></div>
<div class="abs" style="left:696px;top:487px;width:1px;height:12px;background:#dcdcdc"></div>
<div class="abs" style="left:858px;top:487px;width:1px;height:12px;background:#dcdcdc"></div>
<div class="abs" style="left:932px;top:487px;width:1px;height:12px;background:#dcdcdc"></div>
<div class="abs" style="left:1005px;top:487px;width:1px;height:12px;background:#dcdcdc"></div>
<svg class="abs" style="left:14px;top:488.5px" width="11" height="11" viewBox="0 0 11 11"><path d="M1.6 1.2H5.6L8.2 3.8V8.8H1.6Z" fill="#fafafa" stroke="#7a7a7a" stroke-width="0.75"/><path d="M5.6 1.2V3.8H8.2" fill="none" stroke="#9a9a9a" stroke-width="0.6"/><circle cx="7.3" cy="7.3" r="2.4" fill="#2c84bc"/></svg>
<div class="abs txt tl" style="left:26.6px;top:487px;line-height:12px">32145790</div>
<div class="abs txt tr" style="left:108px;width:160.5px;top:487px;line-height:12px;text-align:right">2020.09.25 05:33:47</div>
<div class="abs txt tr" style="left:270px;width:72.5px;top:487px;line-height:12px;text-align:right">buy</div>
<div class="abs txt tr" style="left:344px;width:57.5px;top:487px;line-height:12px;text-align:right">10.00</div>
<div class="abs txt tr" style="left:403px;width:72.19999999999999px;top:487px;line-height:12px;text-align:right">nq100.exp</div>
<div class="abs txt tr" style="left:476.7px;width:71.80000000000001px;top:487px;line-height:12px;text-align:right">10950.0</div>
<div class="abs txt tr" style="left:550px;width:71.5px;top:487px;line-height:12px;text-align:right">0.0</div>
<div class="abs txt tr" style="left:623px;width:71.5px;top:487px;line-height:12px;text-align:right">0.0</div>
<div class="abs txt tr" style="left:696px;width:160.5px;top:487px;line-height:12px;text-align:right">2020.09.25 05:34:13</div>
<div class="abs txt tr" style="left:858px;width:72.5px;top:487px;line-height:12px;text-align:right">10951.8</div>
<div class="abs txt tr" style="left:932px;width:71.5px;top:487px;line-height:12px;text-align:right">0.00</div>
<div class="abs txt tr" style="left:1005px;width:85.5px;top:487px;line-height:12px;text-align:right">360.00</div>
<div class="abs" style="left:13px;top:499px;width:1079px;height:12px;background:#ffffff"></div>
<div class="abs" style="left:13px;top:499px;width:1079px;height:1px;background:#dedede"></div>
<div class="abs" style="left:108px;top:499px;width:1px;height:12px;background:#dcdcdc"></div>
<div class="abs" style="left:270px;top:499px;width:1px;height:12px;background:#dcdcdc"></div>
<div class="abs" style="left:344px;top:499px;width:1px;height:12px;background:#dcdcdc"></div>
<div class="abs" style="left:403px;top:499px;width:1px;height:12px;background:#dcdcdc"></div>
<div class="abs" style="left:476.7px;top:499px;width:1px;height:12px;background:#dcdcdc"></div>
<div class="abs" style="left:550px;top:499px;width:1px;height:12px;background:#dcdcdc"></div>
<div class="abs" style="left:623px;top:499px;width:1px;height:12px;background:#dcdcdc"></div>
<div class="abs" style="left:696px;top:499px;width:1px;height:12px;background:#dcdcdc"></div>
<div class="abs" style="left:858px;top:499px;width:1px;height:12px;background:#dcdcdc"></div>
<div class="abs" style="left:932px;top:499px;width:1px;height:12px;background:#dcdcdc"></div>
<div class="abs" style="left:1005px;top:499px;width:1px;height:12px;background:#dcdcdc"></div>
<svg class="abs" style="left:14px;top:500.5px" width="11" height="11" viewBox="0 0 11 11"><path d="M1.6 1.2H5.6L8.2 3.8V8.8H1.6Z" fill="#fafafa" stroke="#7a7a7a" stroke-width="0.75"/><path d="M5.6 1.2V3.8H8.2" fill="none" stroke="#9a9a9a" stroke-width="0.6"/><circle cx="7.3" cy="7.3" r="2.4" fill="#c8462a"/></svg>
<div class="abs txt tl" style="left:26.6px;top:499px;line-height:12px">32145797</div>
<div class="abs txt tr" style="left:108px;width:160.5px;top:499px;line-height:12px;text-align:right">2020.09.25 05:59:04</div>
<div class="abs txt tr" style="left:270px;width:72.5px;top:499px;line-height:12px;text-align:right">sell</div>
<div class="abs txt tr" style="left:344px;width:57.5px;top:499px;line-height:12px;text-align:right">10.00</div>
<div class="abs txt tr" style="left:403px;width:72.19999999999999px;top:499px;line-height:12px;text-align:right">nq100.exp</div>
<div class="abs txt tr" style="left:476.7px;width:71.80000000000001px;top:499px;line-height:12px;text-align:right">10935.9</div>
<div class="abs txt tr" style="left:550px;width:71.5px;top:499px;line-height:12px;text-align:right">0.0</div>
<div class="abs txt tr" style="left:623px;width:71.5px;top:499px;line-height:12px;text-align:right">0.0</div>
<div class="abs txt tr" style="left:696px;width:160.5px;top:499px;line-height:12px;text-align:right">2020.09.25 05:59:38</div>
<div class="abs txt tr" style="left:858px;width:72.5px;top:499px;line-height:12px;text-align:right">10924.1</div>
<div class="abs txt tr" style="left:932px;width:71.5px;top:499px;line-height:12px;text-align:right">0.00</div>
<div class="abs txt tr" style="left:1005px;width:85.5px;top:499px;line-height:12px;text-align:right">2 360.00</div>
<div class="abs" style="left:13px;top:511px;width:1079px;height:12px;background:#ebebeb"></div>
<div class="abs" style="left:13px;top:511px;width:1079px;height:1px;background:#dedede"></div>
<div class="abs" style="left:108px;top:511px;width:1px;height:12px;background:#dcdcdc"></div>
<div class="abs" style="left:270px;top:511px;width:1px;height:12px;background:#dcdcdc"></div>
<div class="abs" style="left:344px;top:511px;width:1px;height:12px;background:#dcdcdc"></div>
<div class="abs" style="left:403px;top:511px;width:1px;height:12px;background:#dcdcdc"></div>
<div class="abs" style="left:476.7px;top:511px;width:1px;height:12px;background:#dcdcdc"></div>
<div class="abs" style="left:550px;top:511px;width:1px;height:12px;background:#dcdcdc"></div>
<div class="abs" style="left:623px;top:511px;width:1px;height:12px;background:#dcdcdc"></div>
<div class="abs" style="left:696px;top:511px;width:1px;height:12px;background:#dcdcdc"></div>
<div class="abs" style="left:858px;top:511px;width:1px;height:12px;background:#dcdcdc"></div>
<div class="abs" style="left:932px;top:511px;width:1px;height:12px;background:#dcdcdc"></div>
<div class="abs" style="left:1005px;top:511px;width:1px;height:12px;background:#dcdcdc"></div>
<svg class="abs" style="left:14px;top:512.5px" width="11" height="11" viewBox="0 0 11 11"><path d="M1.6 1.2H5.6L8.2 3.8V8.8H1.6Z" fill="#fafafa" stroke="#7a7a7a" stroke-width="0.75"/><path d="M5.6 1.2V3.8H8.2" fill="none" stroke="#9a9a9a" stroke-width="0.6"/><circle cx="7.3" cy="7.3" r="2.4" fill="#c8462a"/></svg>
<div class="abs txt tl" style="left:26.6px;top:511px;line-height:12px">32145805</div>
<div class="abs txt tr" style="left:108px;width:160.5px;top:511px;line-height:12px;text-align:right">2020.09.25 06:19:18</div>
<div class="abs txt tr" style="left:270px;width:72.5px;top:511px;line-height:12px;text-align:right">sell</div>
<div class="abs txt tr" style="left:344px;width:57.5px;top:511px;line-height:12px;text-align:right">10.00</div>
<div class="abs txt tr" style="left:403px;width:72.19999999999999px;top:511px;line-height:12px;text-align:right">nq100.exp</div>
<div class="abs txt tr" style="left:476.7px;width:71.80000000000001px;top:511px;line-height:12px;text-align:right">10895.2</div>
<div class="abs txt tr" style="left:550px;width:71.5px;top:511px;line-height:12px;text-align:right">0.0</div>
<div class="abs txt tr" style="left:623px;width:71.5px;top:511px;line-height:12px;text-align:right">0.0</div>
<div class="abs txt tr" style="left:696px;width:160.5px;top:511px;line-height:12px;text-align:right">2020.09.25 06:19:29</div>
<div class="abs txt tr" style="left:858px;width:72.5px;top:511px;line-height:12px;text-align:right">10899.5</div>
<div class="abs txt tr" style="left:932px;width:71.5px;top:511px;line-height:12px;text-align:right">0.00</div>
<div class="abs txt tr" style="left:1005px;width:85.5px;top:511px;line-height:12px;text-align:right">-860.00</div>
<div class="abs" style="left:13px;top:523px;width:1079px;height:12px;background:#ffffff"></div>
<div class="abs" style="left:13px;top:523px;width:1079px;height:1px;background:#dedede"></div>
<div class="abs" style="left:108px;top:523px;width:1px;height:12px;background:#dcdcdc"></div>
<div class="abs" style="left:270px;top:523px;width:1px;height:12px;background:#dcdcdc"></div>
<div class="abs" style="left:344px;top:523px;width:1px;height:12px;background:#dcdcdc"></div>
<div class="abs" style="left:403px;top:523px;width:1px;height:12px;background:#dcdcdc"></div>
<div class="abs" style="left:476.7px;top:523px;width:1px;height:12px;background:#dcdcdc"></div>
<div class="abs" style="left:550px;top:523px;width:1px;height:12px;background:#dcdcdc"></div>
<div class="abs" style="left:623px;top:523px;width:1px;height:12px;background:#dcdcdc"></div>
<div class="abs" style="left:696px;top:523px;width:1px;height:12px;background:#dcdcdc"></div>
<div class="abs" style="left:858px;top:523px;width:1px;height:12px;background:#dcdcdc"></div>
<div class="abs" style="left:932px;top:523px;width:1px;height:12px;background:#dcdcdc"></div>
<div class="abs" style="left:1005px;top:523px;width:1px;height:12px;background:#dcdcdc"></div>
<svg class="abs" style="left:14px;top:524.5px" width="11" height="11" viewBox="0 0 11 11"><path d="M1.6 1.2H5.6L8.2 3.8V8.8H1.6Z" fill="#fafafa" stroke="#7a7a7a" stroke-width="0.75"/><path d="M5.6 1.2V3.8H8.2" fill="none" stroke="#9a9a9a" stroke-width="0.6"/><circle cx="7.3" cy="7.3" r="2.4" fill="#2c84bc"/></svg>
<div class="abs txt tl" style="left:26.6px;top:523px;line-height:12px">32145986</div>
<div class="abs txt tr" style="left:108px;width:160.5px;top:523px;line-height:12px;text-align:right">2020.09.25 07:05:08</div>
<div class="abs txt tr" style="left:270px;width:72.5px;top:523px;line-height:12px;text-align:right">buy</div>
<div class="abs txt tr" style="left:344px;width:57.5px;top:523px;line-height:12px;text-align:right">10.00</div>
<div class="abs txt tr" style="left:403px;width:72.19999999999999px;top:523px;line-height:12px;text-align:right">nq100.exp</div>
<div class="abs txt tr" style="left:476.7px;width:71.80000000000001px;top:523px;line-height:12px;text-align:right">10902.1</div>
<div class="abs txt tr" style="left:550px;width:71.5px;top:523px;line-height:12px;text-align:right">0.0</div>
<div class="abs txt tr" style="left:623px;width:71.5px;top:523px;line-height:12px;text-align:right">0.0</div>
<div class="abs txt tr" style="left:696px;width:160.5px;top:523px;line-height:12px;text-align:right">2020.09.25 08:37:56</div>
<div class="abs txt tr" style="left:858px;width:72.5px;top:523px;line-height:12px;text-align:right">10894.3</div>
<div class="abs txt tr" style="left:932px;width:71.5px;top:523px;line-height:12px;text-align:right">0.00</div>
<div class="abs txt tr" style="left:1005px;width:85.5px;top:523px;line-height:12px;text-align:right">-1 560.00</div>
<div class="abs" style="left:13px;top:535px;width:1079px;height:12px;background:#0a78d4"></div>
<div class="abs" style="left:108px;top:535px;width:1px;height:12px;background:#5aa6e6"></div>
<div class="abs" style="left:270px;top:535px;width:1px;height:12px;background:#5aa6e6"></div>
<div class="abs" style="left:344px;top:535px;width:1px;height:12px;background:#5aa6e6"></div>
<div class="abs" style="left:858px;top:535px;width:1px;height:12px;background:#5aa6e6"></div>
<div class="abs" style="left:932px;top:535px;width:1px;height:12px;background:#5aa6e6"></div>
<div class="abs" style="left:1005px;top:535px;width:1px;height:12px;background:#5aa6e6"></div>
<div class="abs" style="left:15.5px;top:537px;width:7px;height:8px;background:#fff"></div><div class="abs" style="left:17px;top:539px;width:4px;height:4px;border-radius:50%;background:#e0502a"></div>
<div class="abs txt tl" style="color:#fff;left:26.6px;top:535px;line-height:12px">32147436</div>
<div class="abs txt tr" style="color:#fff;left:108px;width:159.5px;top:535px;line-height:12px;text-align:right">2020.09.25 10:28:41</div>
<div class="abs txt tr" style="color:#fff;left:270px;width:71.5px;top:535px;line-height:12px;text-align:right">balance</div>
<div class="abs txt tr" style="color:#fff;left:932px;width:71px;top:535px;line-height:12px;text-align:right">Withdrawal</div>
<div class="abs txt tr" style="color:#fff;left:1005px;width:84.5px;top:535px;line-height:12px;text-align:right">-22 432.21</div>
<div class="abs" style="left:13px;top:547px;width:1079px;height:11.5px;background:#d4d4d4"></div>
<div class="abs" style="left:17px;top:551px;width:4px;height:4px;border-radius:50%;background:#c8c8c8;border:0.5px solid #aaa"></div>
<div class="abs txt" style="left:27.5px;top:547.8px;line-height:11.5px;font-weight:bold;color:#222">盈/亏: 17 750.89 &nbsp;信用额: 0.00 &nbsp;存款: 100 552.57 &nbsp;取款: -100 552.57</div>
<div class="abs txt" style="left:1005px;width:84.5px;top:547.8px;line-height:11.5px;text-align:right;font-weight:bold;color:#222">17 750.89</div>
<div class="abs" style="left:13px;top:566.8px;width:1079px;height:13.5px;background:#f3f3f3"></div>
<div class="abs" style="left:13px;top:566px;width:1088px;height:1px;background:#5a5a5a"></div>
<div class="abs" style="left:20px;top:567.5px;line-height:10px;color:#8a8a8a;font-size:7.0px">交易</div>
<div class="abs" style="left:45.5px;top:567.5px;line-height:10px;color:#8a8a8a;font-size:7.0px">展示</div>
<div class="abs" style="left:109.4px;top:567.5px;line-height:10px;color:#8a8a8a;font-size:7.0px">新闻</div>
<div class="abs" style="left:135.4px;top:567.5px;line-height:10px;color:#8a8a8a;font-size:7.0px">警报</div>
<div class="abs" style="left:160.4px;top:567.5px;line-height:10px;color:#8a8a8a;font-size:7.0px">邮箱</div>
<div class="abs" style="left:190px;top:567.5px;line-height:10px;color:#8a8a8a;font-size:7.0px">市场</div>
<div class="abs" style="left:226.7px;top:567.5px;line-height:10px;color:#8a8a8a;font-size:7.0px">文章</div>
<div class="abs" style="left:252px;top:567.5px;line-height:10px;color:#8a8a8a;font-size:7.0px">代码库</div>
<div class="abs" style="left:284.4px;top:567.5px;line-height:10px;color:#8a8a8a;font-size:7.2px">EA</div>
<div class="abs" style="left:304px;top:567.5px;line-height:10px;color:#8a8a8a;font-size:7.0px">日志</div>
<div class="abs" style="left:65.5px;top:566px;width:38px;height:12.5px;background:#fff;border:1px solid #333;border-top:none"></div>
<div class="abs" style="left:70.5px;top:567.5px;line-height:10px;color:#111;font-size:7.2px">账户历史</div>
<div class="abs" style="left:40.5px;top:568.5px;width:0.8px;height:9px;background:#909090"></div>
<div class="abs" style="left:129.8px;top:568.5px;width:0.8px;height:9px;background:#909090"></div>
<div class="abs" style="left:154.6px;top:568.5px;width:0.8px;height:9px;background:#909090"></div>
<div class="abs" style="left:184.4px;top:568.5px;width:0.8px;height:9px;background:#909090"></div>
<div class="abs" style="left:221px;top:568.5px;width:0.8px;height:9px;background:#909090"></div>
<div class="abs" style="left:246.9px;top:568.5px;width:0.8px;height:9px;background:#909090"></div>
<div class="abs" style="left:278.75px;top:568.5px;width:0.8px;height:9px;background:#909090"></div>
<div class="abs" style="left:298.5px;top:568.5px;width:0.8px;height:9px;background:#909090"></div>
<div class="abs" style="left:324px;top:568.5px;width:0.8px;height:9px;background:#909090"></div>
<div class="abs" style="left:175px;top:571.5px;line-height:6px;color:#e02020;font-size:5px;font-weight:bold">6</div>
<div class="abs" style="left:205px;top:571.5px;line-height:6px;color:#e02020;font-size:5.6px;font-weight:bold">122</div>
<div class="abs" style="left:0;top:580.5px;width:1104px;height:1px;background:#fbfbfb"></div>
<div class="abs" style="left:0;top:581.5px;width:1104px;height:13.5px;background:#f0f0f0"></div>
<div class="abs" style="left:0;top:585.5px;width:0;height:0;border-left:2px solid #444;border-top:2px solid transparent;border-bottom:2px solid transparent"></div>
<div class="abs txt" style="left:6px;top:582.5px;line-height:11px;font-size:7.1px">交易历史页</div>

<div class="abs" style="left:1093px;top:546.7px;width:8px;height:9.7px;background:#c4c4c4"></div>
<div class="abs" style="left:1095px;top:558.5px;width:3px;height:3px;border-right:1px solid #555;border-bottom:1px solid #555;transform:rotate(45deg)"></div>
<div class="abs" style="left:1095.5px;top:309.5px;width:3px;height:3px;border-left:1px solid #555;border-top:1px solid #555;transform:rotate(45deg)"></div>
<div class="abs" style="left:647.6px;top:582px;width:1px;height:12.5px;background:#cfcfcf"></div>
<div class="abs" style="left:725.3px;top:582px;width:1px;height:12.5px;background:#cfcfcf"></div>
<div class="abs" style="left:792px;top:582px;width:1px;height:12.5px;background:#cfcfcf"></div>
<div class="abs" style="left:839.7px;top:582px;width:1px;height:12.5px;background:#cfcfcf"></div>
<div class="abs" style="left:886px;top:582px;width:1px;height:12.5px;background:#cfcfcf"></div>
<div class="abs" style="left:930px;top:582px;width:1px;height:12.5px;background:#cfcfcf"></div>
<div class="abs" style="left:976.3px;top:582px;width:1px;height:12.5px;background:#cfcfcf"></div>
<div class="abs" style="left:1021.4px;top:582px;width:1px;height:12.5px;background:#cfcfcf"></div>
<div class="abs txt" style="left:652px;top:582.5px;line-height:12px;font-size:7px">Default</div>
<svg class="abs" style="left:1023px;top:584px" width="14" height="8"><rect x="0" y="0" width="14" height="8" fill="#e8c8c8"/><rect x="0.5" y="0.5" width="1.6" height="7" fill="#c83030"/><rect x="3.2" y="0.5" width="1.6" height="7" fill="#c83030"/><rect x="5.9" y="0.5" width="1.6" height="7" fill="#c83030"/><rect x="8.600000000000001" y="0.5" width="1.6" height="7" fill="#c83030"/><rect x="11.3" y="0.5" width="1.6" height="7" fill="#c83030"/><rect x="0" y="3.5" width="14" height="1" fill="#f0d0d0"/></svg>
<div class="abs txt" style="left:1039px;top:582.5px;line-height:12px;font-size:7.2px">没有连接</div>
<div class="abs" style="left:0;top:595.5px;width:1104px;height:4.5px;background:#1c1c1c"></div>
<div class="abs" style="left:454px;top:595.5px;width:27px;height:4.5px;background:#5a5a5a"></div>
<div class="abs" style="left:0;top:595.5px;width:1104px;height:4.5px;overflow:hidden"><div class="abs" style="left:1044px;top:2.8px;font-size:6px;line-height:6px;color:#ddd">10:41</div><div class="abs" style="left:1101px;top:0;width:1px;height:5px;background:#777"></div></div>
</body></html>
